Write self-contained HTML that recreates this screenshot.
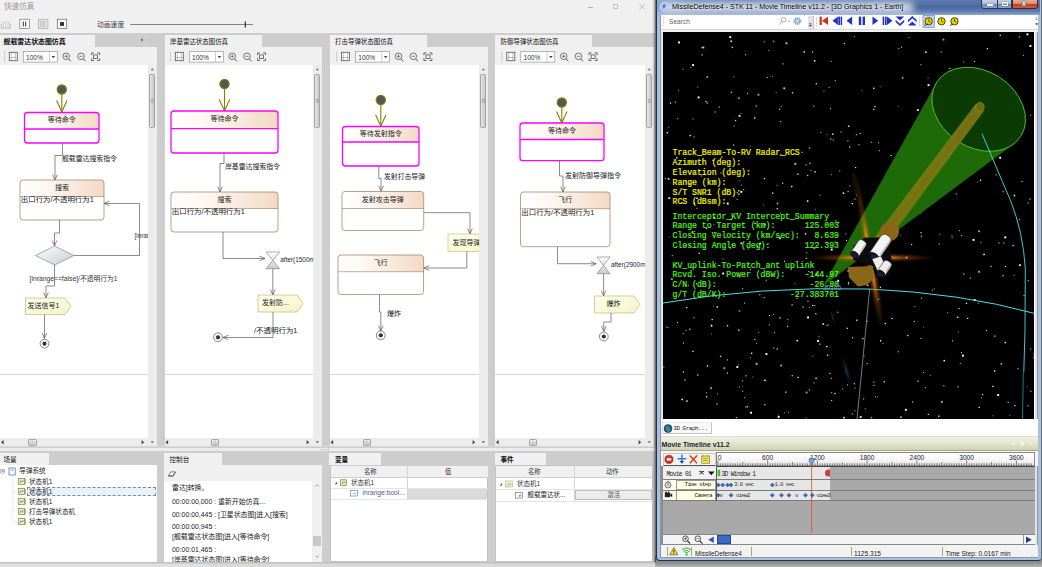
<!DOCTYPE html>
<html><head><meta charset="utf-8"><title>快速仿真</title>
<style>
html,body{margin:0;padding:0}
body{width:1042px;height:567px;position:relative;overflow:hidden;background:#cdcdcd;font-family:'Liberation Sans','Noto Sans CJK SC',sans-serif;}
div{box-sizing:border-box}
svg{position:absolute;left:0;top:0;overflow:hidden}
svg text{font-family:'Liberation Sans','Noto Sans CJK SC',sans-serif}
.m text{font-family:'Liberation Mono','DejaVu Sans Mono',monospace}
</style></head><body>
<div style="position:absolute;left:0px;top:0px;width:655px;height:33px;background:#f0f0f0;"></div>
<div style="position:absolute;left:4px;top:1.5px;font-size:7.6px;line-height:9.6px;color:#9a9a9a;white-space:nowrap;">快速仿真</div>
<div style="position:absolute;left:587.5px;top:7px;width:5px;height:0.8px;background:#b0b0b0;"></div>
<div style="position:absolute;left:612.9px;top:4.4px;width:5.5px;height:5.1px;background:transparent;border:0.7px solid #c2c2c2"></div>
<svg width="655" height="14" viewBox="0 0 655 14"><path d="M639.2 3.8l5.7 5.8M644.9 3.8l-5.7 5.8" stroke="#b4b4b4" stroke-width="0.8"/></svg>
<svg width="655" height="34" viewBox="0 0 655 34">
<g stroke="#a8a8a8" stroke-width="0.8" fill="none"><path d="M1.3 23.5v4.6h9v-4.6"/><path d="M3.4 21.5v5M5.8 21.5v5M8.2 21.5v5" stroke-dasharray="1.2 0.7"/></g>
<rect x="19.8" y="19.2" width="9.6" height="9.4" fill="#fafafa" stroke="#777" stroke-width="0.7"/><path d="M23.3 21.5v5M25.7 21.5v5" stroke="#333" stroke-width="1"/>
<rect x="38.3" y="19.2" width="9.6" height="9.4" fill="#e4e4e4" stroke="#aaa" stroke-width="0.7"/><rect x="40.5" y="21.5" width="4.5" height="5" fill="#d0d0d0" stroke="#bbb" stroke-width="0.5"/>
<rect x="57.3" y="19.2" width="9.4" height="9.4" fill="#fafafa" stroke="#666" stroke-width="0.7"/><rect x="60" y="22.1" width="4" height="3.8" fill="#333"/>
<path d="M130 24.5H253" stroke="#555" stroke-width="0.7"/><path d="M245.3 21.5v6" stroke="#333" stroke-width="1.2"/>
</svg>
<div style="position:absolute;left:97px;top:20.5px;font-size:6.8px;line-height:8.8px;color:#444;white-space:nowrap;">动画速度</div>
<div style="position:absolute;left:0px;top:35px;width:95px;height:12.5px;background:#f0f0f0;"></div>
<div style="position:absolute;left:3.6px;top:38.3px;font-size:6.9px;line-height:8.9px;color:#111;white-space:nowrap;font-weight:bold;">舰载雷达状态图仿真</div>
<div style="position:absolute;left:0px;top:47px;width:157.2px;height:18.5px;background:#f0f0f0;border-bottom:0.8px solid #c8c8c8"></div>
<div style="position:absolute;left:0px;top:65.3px;width:148.2px;height:373px;background:#fff;"></div>
<div style="position:absolute;left:148.2px;top:65.3px;width:9px;height:373px;background:#ececec;"></div>
<div style="position:absolute;left:148.6px;top:74px;width:6.5px;height:53.5px;background:#d4d4d4;border:0.6px solid #a4a4a4;border-radius:1.2px;background:linear-gradient(90deg,#e6e6e6,#c8c8c8)"></div>
<div style="position:absolute;left:0px;top:438px;width:157.2px;height:8.3px;background:#ececec;"></div>
<div style="position:absolute;left:27.5px;top:439px;width:9.5px;height:6.6px;background:#d4d4d4;border:0.6px solid #a4a4a4;border-radius:1.2px;background:linear-gradient(#ececec,#c8c8c8)"></div>
<div style="position:absolute;left:0px;top:374px;width:148.2px;height:0.8px;background:#d8d8d8;"></div>
<div style="position:absolute;left:164.5px;top:35px;width:97px;height:12.5px;background:#f0f0f0;"></div>
<div style="position:absolute;left:170.1px;top:38.3px;font-size:6.45px;line-height:8.45px;color:#111;white-space:nowrap;">岸基雷达状态图仿真</div>
<div style="position:absolute;left:164.5px;top:47px;width:157.7px;height:18.5px;background:#f0f0f0;border-bottom:0.8px solid #c8c8c8"></div>
<div style="position:absolute;left:164.5px;top:65.3px;width:148.7px;height:373px;background:#fff;"></div>
<div style="position:absolute;left:313.2px;top:65.3px;width:9px;height:373px;background:#ececec;"></div>
<div style="position:absolute;left:313.59999999999997px;top:74px;width:6.5px;height:53.5px;background:#d4d4d4;border:0.6px solid #a4a4a4;border-radius:1.2px;background:linear-gradient(90deg,#e6e6e6,#c8c8c8)"></div>
<div style="position:absolute;left:164.5px;top:438px;width:157.7px;height:8.3px;background:#ececec;"></div>
<div style="position:absolute;left:211.1px;top:439px;width:7.8px;height:6.6px;background:#d4d4d4;border:0.6px solid #a4a4a4;border-radius:1.2px;background:linear-gradient(#ececec,#c8c8c8)"></div>
<div style="position:absolute;left:164.5px;top:374px;width:148.7px;height:0.8px;background:#d8d8d8;"></div>
<div style="position:absolute;left:329.5px;top:35px;width:97px;height:12.5px;background:#f0f0f0;"></div>
<div style="position:absolute;left:335.1px;top:38.3px;font-size:6.45px;line-height:8.45px;color:#111;white-space:nowrap;">打击导弹状态图仿真</div>
<div style="position:absolute;left:329.5px;top:47px;width:158.7px;height:18.5px;background:#f0f0f0;border-bottom:0.8px solid #c8c8c8"></div>
<div style="position:absolute;left:329.5px;top:65.3px;width:149.7px;height:373px;background:#fff;"></div>
<div style="position:absolute;left:479.2px;top:65.3px;width:9px;height:373px;background:#ececec;"></div>
<div style="position:absolute;left:479.59999999999997px;top:74px;width:6.5px;height:53.5px;background:#d4d4d4;border:0.6px solid #a4a4a4;border-radius:1.2px;background:linear-gradient(90deg,#e6e6e6,#c8c8c8)"></div>
<div style="position:absolute;left:329.5px;top:438px;width:158.7px;height:8.3px;background:#ececec;"></div>
<div style="position:absolute;left:362.5px;top:439px;width:8.5px;height:6.6px;background:#d4d4d4;border:0.6px solid #a4a4a4;border-radius:1.2px;background:linear-gradient(#ececec,#c8c8c8)"></div>
<div style="position:absolute;left:329.5px;top:374px;width:149.7px;height:0.8px;background:#d8d8d8;"></div>
<div style="position:absolute;left:495px;top:35px;width:96.5px;height:12.5px;background:#f0f0f0;"></div>
<div style="position:absolute;left:500.6px;top:38.3px;font-size:6.45px;line-height:8.45px;color:#111;white-space:nowrap;">防御导弹状态图仿真</div>
<div style="position:absolute;left:495px;top:47px;width:159.2px;height:18.5px;background:#f0f0f0;border-bottom:0.8px solid #c8c8c8"></div>
<div style="position:absolute;left:495px;top:65.3px;width:150.2px;height:373px;background:#fff;"></div>
<div style="position:absolute;left:645.2px;top:65.3px;width:9px;height:373px;background:#ececec;"></div>
<div style="position:absolute;left:645.6px;top:74px;width:6.5px;height:53.5px;background:#d4d4d4;border:0.6px solid #a4a4a4;border-radius:1.2px;background:linear-gradient(90deg,#e6e6e6,#c8c8c8)"></div>
<div style="position:absolute;left:495px;top:438px;width:159.2px;height:8.3px;background:#ececec;"></div>
<div style="position:absolute;left:528.8px;top:439px;width:8.3px;height:6.6px;background:#d4d4d4;border:0.6px solid #a4a4a4;border-radius:1.2px;background:linear-gradient(#ececec,#c8c8c8)"></div>
<div style="position:absolute;left:495px;top:374px;width:150.2px;height:0.8px;background:#d8d8d8;"></div>
<svg width="655" height="450" viewBox="0 0 655 450">
<g transform="translate(0,0)"><g transform="translate(0,0.5)"><path d="M4.5 51v10" stroke="#bbb" stroke-width="0.7"/><rect x="9.3" y="51.8" width="8" height="8.4" fill="#fff" stroke="#555" stroke-width="0.8"/><path d="M9.3 57h8M11.3 51.8v8.4M15.3 51.8v8.4" stroke="#888" stroke-width="0.5"/><rect x="23.3" y="51" width="34" height="10.6" fill="#fff" stroke="#999" stroke-width="0.7"/><path d="M49.5 51v10.6" stroke="#aaa" stroke-width="0.6"/><path d="M51.6 55.5h3.6l-1.8 2.2z" fill="#444"/><circle cx="66.2" cy="55.8" r="3.3" fill="none" stroke="#555" stroke-width="0.8"/><path d="M68.60000000000001 58.4l2.2 2.4" stroke="#555" stroke-width="1"/><path d="M64.5 55.8h3.4" stroke="#555" stroke-width="0.7"/><path d="M66.2 54.1v3.4" stroke="#555" stroke-width="0.7"/><circle cx="81" cy="55.8" r="3.3" fill="none" stroke="#555" stroke-width="0.8"/><path d="M83.4 58.4l2.2 2.4" stroke="#555" stroke-width="1"/><path d="M79.3 55.8h3.4" stroke="#555" stroke-width="0.7"/><path d="M91.6 54.6v-2.2h2.4M97.2 52.4h2.4v2.2M99.6 57.8v2.2h-2.4M94 60h-2.4v-2.2" fill="none" stroke="#555" stroke-width="0.9"/><rect x="93.6" y="54.4" width="4" height="3.7" fill="none" stroke="#555" stroke-width="0.8"/></g><path d="M150.79999999999998 70.2h3l-1.5 -2z" fill="#666"/><path d="M150.7 99.3h3.2M150.7 100.8h3.2M150.7 102.3h3.2" stroke="#777" stroke-width="0.5"/><path d="M3.6 440v4.4l-2.6 -2.2z" fill="#444"/><path d="M141.6 440v4.4l2.6 -2.2z" fill="#444"/><path d="M150.6 441.3h3.4l-1.7 2z" fill="#666"/><path d="M32.3 440.5v3.5" stroke="#999" stroke-width="0.4"/></g>
<g transform="translate(164.5,0)"><g transform="translate(1.5,0.5)"><path d="M4.5 51v10" stroke="#bbb" stroke-width="0.7"/><rect x="9.3" y="51.8" width="8" height="8.4" fill="#fff" stroke="#555" stroke-width="0.8"/><path d="M9.3 57h8M11.3 51.8v8.4M15.3 51.8v8.4" stroke="#888" stroke-width="0.5"/><rect x="23.3" y="51" width="34" height="10.6" fill="#fff" stroke="#999" stroke-width="0.7"/><path d="M49.5 51v10.6" stroke="#aaa" stroke-width="0.6"/><path d="M51.6 55.5h3.6l-1.8 2.2z" fill="#444"/><circle cx="66.2" cy="55.8" r="3.3" fill="none" stroke="#555" stroke-width="0.8"/><path d="M68.60000000000001 58.4l2.2 2.4" stroke="#555" stroke-width="1"/><path d="M64.5 55.8h3.4" stroke="#555" stroke-width="0.7"/><path d="M66.2 54.1v3.4" stroke="#555" stroke-width="0.7"/><circle cx="81" cy="55.8" r="3.3" fill="none" stroke="#555" stroke-width="0.8"/><path d="M83.4 58.4l2.2 2.4" stroke="#555" stroke-width="1"/><path d="M79.3 55.8h3.4" stroke="#555" stroke-width="0.7"/><path d="M91.6 54.6v-2.2h2.4M97.2 52.4h2.4v2.2M99.6 57.8v2.2h-2.4M94 60h-2.4v-2.2" fill="none" stroke="#555" stroke-width="0.9"/><rect x="93.6" y="54.4" width="4" height="3.7" fill="none" stroke="#555" stroke-width="0.8"/></g><path d="M151.29999999999998 70.2h3l-1.5 -2z" fill="#666"/><path d="M151.2 99.3h3.2M151.2 100.8h3.2M151.2 102.3h3.2" stroke="#777" stroke-width="0.5"/><path d="M3.6 440v4.4l-2.6 -2.2z" fill="#444"/><path d="M142.1 440v4.4l2.6 -2.2z" fill="#444"/><path d="M151.1 441.3h3.4l-1.7 2z" fill="#666"/><path d="M50.5 440.5v3.5" stroke="#999" stroke-width="0.4"/></g>
<g transform="translate(329.5,0)"><g transform="translate(2.8,0.5)"><path d="M4.5 51v10" stroke="#bbb" stroke-width="0.7"/><rect x="9.3" y="51.8" width="8" height="8.4" fill="#fff" stroke="#555" stroke-width="0.8"/><path d="M9.3 57h8M11.3 51.8v8.4M15.3 51.8v8.4" stroke="#888" stroke-width="0.5"/><rect x="23.3" y="51" width="34" height="10.6" fill="#fff" stroke="#999" stroke-width="0.7"/><path d="M49.5 51v10.6" stroke="#aaa" stroke-width="0.6"/><path d="M51.6 55.5h3.6l-1.8 2.2z" fill="#444"/><circle cx="66.2" cy="55.8" r="3.3" fill="none" stroke="#555" stroke-width="0.8"/><path d="M68.60000000000001 58.4l2.2 2.4" stroke="#555" stroke-width="1"/><path d="M64.5 55.8h3.4" stroke="#555" stroke-width="0.7"/><path d="M66.2 54.1v3.4" stroke="#555" stroke-width="0.7"/><circle cx="81" cy="55.8" r="3.3" fill="none" stroke="#555" stroke-width="0.8"/><path d="M83.4 58.4l2.2 2.4" stroke="#555" stroke-width="1"/><path d="M79.3 55.8h3.4" stroke="#555" stroke-width="0.7"/><path d="M91.6 54.6v-2.2h2.4M97.2 52.4h2.4v2.2M99.6 57.8v2.2h-2.4M94 60h-2.4v-2.2" fill="none" stroke="#555" stroke-width="0.9"/><rect x="93.6" y="54.4" width="4" height="3.7" fill="none" stroke="#555" stroke-width="0.8"/></g><path d="M152.29999999999998 70.2h3l-1.5 -2z" fill="#666"/><path d="M152.2 99.3h3.2M152.2 100.8h3.2M152.2 102.3h3.2" stroke="#777" stroke-width="0.5"/><path d="M3.6 440v4.4l-2.6 -2.2z" fill="#444"/><path d="M143.1 440v4.4l2.6 -2.2z" fill="#444"/><path d="M152.1 441.3h3.4l-1.7 2z" fill="#666"/><path d="M37.3 440.5v3.5" stroke="#999" stroke-width="0.4"/></g>
<g transform="translate(495,0)"><g transform="translate(2.5,0.5)"><path d="M4.5 51v10" stroke="#bbb" stroke-width="0.7"/><rect x="9.3" y="51.8" width="8" height="8.4" fill="#fff" stroke="#555" stroke-width="0.8"/><path d="M9.3 57h8M11.3 51.8v8.4M15.3 51.8v8.4" stroke="#888" stroke-width="0.5"/><rect x="23.3" y="51" width="34" height="10.6" fill="#fff" stroke="#999" stroke-width="0.7"/><path d="M49.5 51v10.6" stroke="#aaa" stroke-width="0.6"/><path d="M51.6 55.5h3.6l-1.8 2.2z" fill="#444"/><circle cx="66.2" cy="55.8" r="3.3" fill="none" stroke="#555" stroke-width="0.8"/><path d="M68.60000000000001 58.4l2.2 2.4" stroke="#555" stroke-width="1"/><path d="M64.5 55.8h3.4" stroke="#555" stroke-width="0.7"/><path d="M66.2 54.1v3.4" stroke="#555" stroke-width="0.7"/><circle cx="81" cy="55.8" r="3.3" fill="none" stroke="#555" stroke-width="0.8"/><path d="M83.4 58.4l2.2 2.4" stroke="#555" stroke-width="1"/><path d="M79.3 55.8h3.4" stroke="#555" stroke-width="0.7"/><path d="M91.6 54.6v-2.2h2.4M97.2 52.4h2.4v2.2M99.6 57.8v2.2h-2.4M94 60h-2.4v-2.2" fill="none" stroke="#555" stroke-width="0.9"/><rect x="93.6" y="54.4" width="4" height="3.7" fill="none" stroke="#555" stroke-width="0.8"/></g><path d="M152.79999999999998 70.2h3l-1.5 -2z" fill="#666"/><path d="M152.7 99.3h3.2M152.7 100.8h3.2M152.7 102.3h3.2" stroke="#777" stroke-width="0.5"/><path d="M3.6 440v4.4l-2.6 -2.2z" fill="#444"/><path d="M143.6 440v4.4l2.6 -2.2z" fill="#444"/><path d="M152.6 441.3h3.4l-1.7 2z" fill="#666"/><path d="M38 440.5v3.5" stroke="#999" stroke-width="0.4"/></g>
<path d="M142.6 38.2v3.2l-2 -1.6z" fill="#555"/><path d="M149.6 38.2v3.2l2 -1.6z" fill="#bbb"/>
</svg>
<div style="position:absolute;left:26px;top:53.6px;font-size:6.6px;line-height:8.6px;color:#334;white-space:nowrap;">100%</div>
<div style="position:absolute;left:192.0px;top:53.6px;font-size:6.6px;line-height:8.6px;color:#334;white-space:nowrap;">100%</div>
<div style="position:absolute;left:358.3px;top:53.6px;font-size:6.6px;line-height:8.6px;color:#334;white-space:nowrap;">100%</div>
<div style="position:absolute;left:523.5px;top:53.6px;font-size:6.6px;line-height:8.6px;color:#334;white-space:nowrap;">100%</div>
<svg width="655" height="450" viewBox="0 0 655 450">
<defs>
<linearGradient id="hd" x1="0" x2="1" y1="0" y2="0"><stop offset="0" stop-color="#fff"/><stop offset="0.35" stop-color="#fdf6f0"/><stop offset="1" stop-color="#f3d9c4"/></linearGradient>
<linearGradient id="sg" x1="0" x2="1" y1="0" y2="1"><stop offset="0" stop-color="#ffffee"/><stop offset="1" stop-color="#f4f4c4"/></linearGradient>
<linearGradient id="hgl" x1="0" x2="0" y1="0" y2="1"><stop offset="0" stop-color="#fff"/><stop offset="1" stop-color="#c8ccd0"/></linearGradient>
<linearGradient id="dm" x1="0" x2="1" y1="0" y2="1"><stop offset="0" stop-color="#fff"/><stop offset="1" stop-color="#c4ccd4"/></linearGradient>
<clipPath id="c1"><rect x="0" y="65.3" width="148.2" height="372.7"/></clipPath>
<clipPath id="c2"><rect x="164.5" y="65.3" width="148.7" height="372.7"/></clipPath>
<clipPath id="c3"><rect x="329.5" y="65.3" width="149.7" height="372.7"/></clipPath>
<clipPath id="c4"><rect x="495" y="65.3" width="150.2" height="372.7"/></clipPath>
</defs>
<g clip-path="url(#c1)">
<path d="M61.8 89.5V112" stroke="#808000" stroke-width="1.1"/>
<path d="M56.599999999999994 100.5L61.8 112L67.0 100.5" stroke="#808000" stroke-width="1.1" fill="none"/>
<circle cx="61.8" cy="89.5" r="4.6" fill="#555" stroke="#808000" stroke-width="1.2"/>
<rect x="24.5" y="112.5" width="74.5" height="30.5" rx="3" fill="#fff"/>
<path d="M24.5 129.0V115.5a3 3 0 0 1 3 -3H96.0a3 3 0 0 1 3 3V129.0z" fill="url(#hd)"/>
<rect x="24.5" y="112.5" width="74.5" height="30.5" rx="3" fill="none" stroke="#ff00ff" stroke-width="1.3"/>
<path d="M24.5 129.0H99.0" stroke="#ff00ff" stroke-width="1.3"/>
<text x="61.75" y="122.35" font-size="7" text-anchor="middle" fill="#222">等待命令</text>
<path d="M62.5 143V155.5H55V180" stroke="#5a5a5a" stroke-width="0.7" fill="none"/>
<path d="M52.7 174.5L55 180L57.3 174.5" stroke="#5a5a5a" stroke-width="0.7" fill="none"/>
<text x="62" y="160.9" font-size="7" fill="#222" textLength="55" lengthAdjust="spacingAndGlyphs">舰载雷达搜索指令</text>
<rect x="20" y="180" width="84" height="40" rx="3" fill="#fff"/>
<path d="M20 196.5V183a3 3 0 0 1 3 -3H101a3 3 0 0 1 3 3V196.5z" fill="url(#hd)"/>
<rect x="20" y="180" width="84" height="40" rx="3" fill="none" stroke="#9a7a5a" stroke-width="0.7"/>
<path d="M20 196.5H104" stroke="#9a7a5a" stroke-width="0.6"/>
<text x="62.0" y="189.85" font-size="7" text-anchor="middle" fill="#222">搜索</text>
<text x="20.8" y="202.4" font-size="7.3" fill="#222" textLength="73" lengthAdjust="spacingAndGlyphs">出口行为/不透明行为1</text>
<path d="M59.5 220V233H54.5V246" stroke="#5a5a5a" stroke-width="0.7" fill="none"/>
<path d="M52.2 240.5L54.5 246L56.8 240.5" stroke="#5a5a5a" stroke-width="0.7" fill="none"/>
<path d="M35.45 255.5L54.7 246.0L73.95 255.5L54.7 265.0z" fill="url(#dm)" stroke="#777" stroke-width="0.6"/>
<path d="M74 255.5H139.5V203.5H104" stroke="#5a5a5a" stroke-width="0.7" fill="none"/>
<path d="M109.5 201.2L104 203.5L109.5 205.8" stroke="#5a5a5a" stroke-width="0.7" fill="none"/>
<text x="134.5" y="237.70000000000002" font-size="6.3" fill="#334">[inrange==true]</text>
<path d="M54.5 265V286H46V298" stroke="#5a5a5a" stroke-width="0.7" fill="none"/>
<path d="M43.7 292.5L46 298L48.3 292.5" stroke="#5a5a5a" stroke-width="0.7" fill="none"/>
<text x="29.5" y="280.9" font-size="6.6" fill="#334" textLength="88" lengthAdjust="spacingAndGlyphs">[inrange==false]/不透明行为1</text>
<path d="M25.5 298H65.0L71.0 306.25L65.0 314.5H25.5z" fill="url(#sg)" stroke="#b0b070" stroke-width="0.6"/>
<text x="27.5" y="308.15" font-size="7" fill="#222">发送信号1</text>
<path d="M44.5 314.5V338" stroke="#5a5a5a" stroke-width="0.7" fill="none"/>
<path d="M42.2 333.0L44.5 338.5L46.8 333.0" stroke="#5a5a5a" stroke-width="0.7" fill="none"/>
<circle cx="44.5" cy="343.7" r="4.4" fill="#fff" stroke="#555" stroke-width="0.7"/><circle cx="44.5" cy="343.7" r="2.1" fill="#333"/>
</g>
<g clip-path="url(#c2)">
<path d="M224.5 84V111" stroke="#808000" stroke-width="1.1"/>
<path d="M219.3 99.5L224.5 111L229.7 99.5" stroke="#808000" stroke-width="1.1" fill="none"/>
<circle cx="224.5" cy="84" r="4.6" fill="#555" stroke="#808000" stroke-width="1.2"/>
<rect x="171" y="111" width="107" height="42" rx="3" fill="#fff"/>
<path d="M171 128.7V114a3 3 0 0 1 3 -3H275a3 3 0 0 1 3 3V128.7z" fill="url(#hd)"/>
<rect x="171" y="111" width="107" height="42" rx="3" fill="none" stroke="#ff00ff" stroke-width="1.3"/>
<path d="M171 128.7H278" stroke="#ff00ff" stroke-width="1.3"/>
<text x="224.5" y="121.44999999999999" font-size="7" text-anchor="middle" fill="#222">等待命令</text>
<path d="M224 153V163.5H220V192" stroke="#5a5a5a" stroke-width="0.7" fill="none"/>
<path d="M217.7 186.5L220 192L222.3 186.5" stroke="#5a5a5a" stroke-width="0.7" fill="none"/>
<text x="225" y="168.9" font-size="7" fill="#222" textLength="55" lengthAdjust="spacingAndGlyphs">岸基雷达搜索指令</text>
<rect x="171" y="192" width="107" height="40" rx="3" fill="#fff"/>
<path d="M171 208.5V195a3 3 0 0 1 3 -3H275a3 3 0 0 1 3 3V208.5z" fill="url(#hd)"/>
<rect x="171" y="192" width="107" height="40" rx="3" fill="none" stroke="#9a7a5a" stroke-width="0.7"/>
<path d="M171 208.5H278" stroke="#9a7a5a" stroke-width="0.6"/>
<text x="224.5" y="201.85" font-size="7" text-anchor="middle" fill="#222">搜索</text>
<text x="171.8" y="214.4" font-size="7.3" fill="#222" textLength="73" lengthAdjust="spacingAndGlyphs">出口行为/不透明行为1</text>
<path d="M223 232V258.5H265" stroke="#5a5a5a" stroke-width="0.7" fill="none"/>
<path d="M259.5 256.2L265 258.5L259.5 260.8" stroke="#5a5a5a" stroke-width="0.7" fill="none"/>
<path d="M266.05 252H279.55L266.05 268.7H279.55z" fill="url(#hgl)" stroke="#777" stroke-width="0.6"/>
<text x="280.3" y="261.9" font-size="6.4" fill="#223">after(1500ms)</text>
<path d="M272.8 268.7V295" stroke="#5a5a5a" stroke-width="0.7" fill="none"/>
<path d="M270.5 289.5L272.8 295L275.1 289.5" stroke="#5a5a5a" stroke-width="0.7" fill="none"/>
<path d="M258 295H297L303 303.5L297 312H258z" fill="url(#sg)" stroke="#b0b070" stroke-width="0.6"/>
<text x="262" y="305.4" font-size="7" fill="#222">发射防...</text>
<path d="M273 312V337.5H223" stroke="#5a5a5a" stroke-width="0.7" fill="none"/>
<path d="M228.5 335.2L223 337.5L228.5 339.8" stroke="#5a5a5a" stroke-width="0.7" fill="none"/>
<text x="254" y="332.9" font-size="7" fill="#222" textLength="43.5" lengthAdjust="spacingAndGlyphs">/不透明行为1</text>
<circle cx="218" cy="337.3" r="4.4" fill="#fff" stroke="#555" stroke-width="0.7"/><circle cx="218" cy="337.3" r="2.1" fill="#333"/>
</g>
<g clip-path="url(#c3)">
<path d="M380.8 100V126.2" stroke="#808000" stroke-width="1.1"/>
<path d="M375.6 114.7L380.8 126.2L386.0 114.7" stroke="#808000" stroke-width="1.1" fill="none"/>
<circle cx="380.8" cy="100" r="4.6" fill="#555" stroke="#808000" stroke-width="1.2"/>
<rect x="342.5" y="126.5" width="76.5" height="39.5" rx="3" fill="#fff"/>
<path d="M342.5 142.0V129.5a3 3 0 0 1 3 -3H416.0a3 3 0 0 1 3 3V142.0z" fill="url(#hd)"/>
<rect x="342.5" y="126.5" width="76.5" height="39.5" rx="3" fill="none" stroke="#ff00ff" stroke-width="1.3"/>
<path d="M342.5 142.0H419.0" stroke="#ff00ff" stroke-width="1.3"/>
<text x="380.75" y="135.85" font-size="7" text-anchor="middle" fill="#222">等待发射指令</text>
<path d="M378.8 166V178.5H381V191" stroke="#5a5a5a" stroke-width="0.7" fill="none"/>
<path d="M378.7 185.8L381 191.3L383.3 185.8" stroke="#5a5a5a" stroke-width="0.7" fill="none"/>
<text x="384" y="178.9" font-size="7" fill="#222" textLength="41" lengthAdjust="spacingAndGlyphs">发射打击导弹</text>
<rect x="342" y="191.5" width="81.7" height="39" rx="3" fill="#fff"/>
<path d="M342 208.5V194.5a3 3 0 0 1 3 -3H420.7a3 3 0 0 1 3 3V208.5z" fill="url(#hd)"/>
<rect x="342" y="191.5" width="81.7" height="39" rx="3" fill="none" stroke="#9a7a5a" stroke-width="0.7"/>
<path d="M342 208.5H423.7" stroke="#9a7a5a" stroke-width="0.6"/>
<text x="382.85" y="201.6" font-size="7" text-anchor="middle" fill="#222">发射攻击导弹</text>
<path d="M423.7 212.7H470V234" stroke="#5a5a5a" stroke-width="0.7" fill="none"/>
<path d="M467.7 228.5L470 234L472.3 228.5" stroke="#5a5a5a" stroke-width="0.7" fill="none"/>
<rect x="448" y="234" width="50" height="17.5" fill="url(#sg)" stroke="#b8b878" stroke-width="0.6"/>
<text x="452.5" y="244.65" font-size="7" fill="#222">发现导弹</text>
<path d="M466.8 251.5V268H423.5" stroke="#5a5a5a" stroke-width="0.7" fill="none"/>
<path d="M429.2 265.7L423.7 268L429.2 270.3" stroke="#5a5a5a" stroke-width="0.7" fill="none"/>
<rect x="338" y="255" width="85.5" height="39.5" rx="3" fill="#fff"/>
<path d="M338 271.7V258a3 3 0 0 1 3 -3H420.5a3 3 0 0 1 3 3V271.7z" fill="url(#hd)"/>
<rect x="338" y="255" width="85.5" height="39.5" rx="3" fill="none" stroke="#9a7a5a" stroke-width="0.7"/>
<path d="M338 271.7H423.5" stroke="#9a7a5a" stroke-width="0.6"/>
<text x="380.75" y="264.95000000000005" font-size="7" text-anchor="middle" fill="#222">飞行</text>
<path d="M379.5 294.5V312H380.8V331" stroke="#5a5a5a" stroke-width="0.7" fill="none"/>
<path d="M378.5 325.5L380.8 331L383.1 325.5" stroke="#5a5a5a" stroke-width="0.7" fill="none"/>
<text x="387" y="316.4" font-size="7" fill="#222" textLength="14" lengthAdjust="spacingAndGlyphs">爆炸</text>
<circle cx="380.8" cy="335.3" r="4.4" fill="#fff" stroke="#555" stroke-width="0.7"/><circle cx="380.8" cy="335.3" r="2.1" fill="#333"/>
</g>
<g clip-path="url(#c4)">
<path d="M561.8 102.5V123" stroke="#808000" stroke-width="1.1"/>
<path d="M556.5999999999999 111.5L561.8 123L567.0 111.5" stroke="#808000" stroke-width="1.1" fill="none"/>
<circle cx="561.8" cy="102.5" r="4.6" fill="#555" stroke="#808000" stroke-width="1.2"/>
<rect x="520" y="123" width="84" height="37.7" rx="3" fill="#fff"/>
<path d="M520 139.5V126a3 3 0 0 1 3 -3H601a3 3 0 0 1 3 3V139.5z" fill="url(#hd)"/>
<rect x="520" y="123" width="84" height="37.7" rx="3" fill="none" stroke="#ff00ff" stroke-width="1.3"/>
<path d="M520 139.5H604" stroke="#ff00ff" stroke-width="1.3"/>
<text x="562.0" y="132.85" font-size="7" text-anchor="middle" fill="#222">等待命令</text>
<path d="M559.5 161V176H563V192" stroke="#5a5a5a" stroke-width="0.7" fill="none"/>
<path d="M560.7 186.5L563 192L565.3 186.5" stroke="#5a5a5a" stroke-width="0.7" fill="none"/>
<text x="565" y="178.1" font-size="7" fill="#222" textLength="56" lengthAdjust="spacingAndGlyphs">发射防御导弹指令</text>
<rect x="520.5" y="192" width="89.5" height="54.7" rx="3" fill="#fff"/>
<path d="M520.5 208.7V195a3 3 0 0 1 3 -3H607.0a3 3 0 0 1 3 3V208.7z" fill="url(#hd)"/>
<rect x="520.5" y="192" width="89.5" height="54.7" rx="3" fill="none" stroke="#9a7a5a" stroke-width="0.7"/>
<path d="M520.5 208.7H610.0" stroke="#9a7a5a" stroke-width="0.6"/>
<text x="565.25" y="201.95" font-size="7" text-anchor="middle" fill="#222">飞行</text>
<text x="521.3" y="214.6" font-size="7.3" fill="#222" textLength="73" lengthAdjust="spacingAndGlyphs">出口行为/不透明行为1</text>
<path d="M557.5 247V263.7H596" stroke="#5a5a5a" stroke-width="0.7" fill="none"/>
<path d="M590.8 261.4L596.3 263.7L590.8 266.0" stroke="#5a5a5a" stroke-width="0.7" fill="none"/>
<path d="M597.0 257H610.0L597.0 273.7H610.0z" fill="url(#hgl)" stroke="#777" stroke-width="0.6"/>
<text x="611" y="266.9" font-size="6.4" fill="#223">after(2900ms)</text>
<path d="M603.6 273.7V296" stroke="#5a5a5a" stroke-width="0.7" fill="none"/>
<path d="M601.3000000000001 290.5L603.6 296L605.9 290.5" stroke="#5a5a5a" stroke-width="0.7" fill="none"/>
<path d="M594.5 296H634.0L640.0 304.5L634.0 313H594.5z" fill="url(#sg)" stroke="#b0b070" stroke-width="0.6"/>
<text x="606.5" y="306.4" font-size="7" fill="#222">爆炸</text>
<path d="M611 313V322H603.8V331" stroke="#5a5a5a" stroke-width="0.7" fill="none"/>
<path d="M601.5 326.0L603.8 331.5L606.0999999999999 326.0" stroke="#5a5a5a" stroke-width="0.7" fill="none"/>
<circle cx="603.8" cy="336.5" r="4.4" fill="#fff" stroke="#555" stroke-width="0.7"/><circle cx="603.8" cy="336.5" r="2.1" fill="#333"/>
</g>
</svg>
<div style="position:absolute;left:0px;top:446.3px;width:655.6px;height:1.2px;background:#d8d8d8;"></div>
<div style="position:absolute;left:0px;top:447.5px;width:655.6px;height:3.6px;background:#ececec;"></div>
<div style="position:absolute;left:320.6px;top:445.8px;font-size:5.5px;line-height:7.5px;color:#6a8ab0;white-space:nowrap;letter-spacing:0.6px;line-height:6px;font-weight:bold">····</div>
<div style="position:absolute;left:0px;top:561.8px;width:655.6px;height:1.7px;background:#c2c2c2;"></div>
<div style="position:absolute;left:0px;top:563.5px;width:655.6px;height:3.5px;background:#e0e0e0;"></div>
<div style="position:absolute;left:209px;top:563.5px;width:446.6px;height:3.5px;background:#dadada;"></div>
<div style="position:absolute;left:0px;top:453px;width:49px;height:12.3px;background:#f0f0f0;"></div>
<div style="position:absolute;left:3.5px;top:455.6px;font-size:6.6px;line-height:8.6px;color:#111;white-space:nowrap;">场景</div>
<div style="position:absolute;left:0px;top:465.3px;width:157.2px;height:96.7px;background:#fff;"></div>
<div style="position:absolute;left:27.2px;top:486.6px;width:129px;height:9.8px;background:#e8f2fc;border:0.6px dashed #7a8a9a"></div>
<div style="position:absolute;left:19.3px;top:467.29999999999995px;font-size:6.6px;line-height:8.6px;color:#222;white-space:nowrap;">导弹系统</div>
<div style="position:absolute;left:29px;top:477.5px;font-size:6.6px;line-height:8.6px;color:#222;white-space:nowrap;">状态机1</div>
<div style="position:absolute;left:29px;top:487.5px;font-size:6.6px;line-height:8.6px;color:#222;white-space:nowrap;">状态机1</div>
<div style="position:absolute;left:29px;top:497.59999999999997px;font-size:6.6px;line-height:8.6px;color:#222;white-space:nowrap;">状态机1</div>
<div style="position:absolute;left:29px;top:507.69999999999993px;font-size:6.6px;line-height:8.6px;color:#222;white-space:nowrap;">打击导弹状态机</div>
<div style="position:absolute;left:29px;top:517.6px;font-size:6.6px;line-height:8.6px;color:#222;white-space:nowrap;">状态机1</div>
<svg width="160" height="567" viewBox="0 0 160 567">
<rect x="0.8" y="469.3" width="3.8" height="3.8" fill="#fff" stroke="#8a8a8a" stroke-width="0.6"/><path d="M1.7 471.2h2" stroke="#223" stroke-width="0.7"/>
<rect x="9" y="468" width="6.2" height="7" fill="#fff" stroke="#4a7ab8" stroke-width="0.8"/><path d="M10.5 470h3.2" stroke="#4a7ab8" stroke-width="0.7"/>
<path d="M12.5 476V521.5" stroke="#bbb" stroke-width="0.5" stroke-dasharray="0.7 0.9"/>
<path d="M12.5 481.6h5" stroke="#bbb" stroke-width="0.5" stroke-dasharray="0.7 0.9"/>
<rect x="18.3" y="478.40000000000003" width="6.4" height="6" fill="#e8ecc8" stroke="#7a8a3a" stroke-width="0.7"/><path d="M19.5 482.90000000000003l1.4 -2.2 1.2 1.4 1.4 -2" stroke="#5a6a2a" stroke-width="0.6" fill="none"/><path d="M25.3 479.1v5" stroke="#444" stroke-width="0.5"/>
<path d="M12.5 491.6h5" stroke="#bbb" stroke-width="0.5" stroke-dasharray="0.7 0.9"/>
<rect x="18.3" y="488.40000000000003" width="6.4" height="6" fill="#e8ecc8" stroke="#7a8a3a" stroke-width="0.7"/><path d="M19.5 492.90000000000003l1.4 -2.2 1.2 1.4 1.4 -2" stroke="#5a6a2a" stroke-width="0.6" fill="none"/><path d="M25.3 489.1v5" stroke="#444" stroke-width="0.5"/>
<path d="M12.5 501.7h5" stroke="#bbb" stroke-width="0.5" stroke-dasharray="0.7 0.9"/>
<rect x="18.3" y="498.5" width="6.4" height="6" fill="#e8ecc8" stroke="#7a8a3a" stroke-width="0.7"/><path d="M19.5 503.0l1.4 -2.2 1.2 1.4 1.4 -2" stroke="#5a6a2a" stroke-width="0.6" fill="none"/><path d="M25.3 499.2v5" stroke="#444" stroke-width="0.5"/>
<path d="M12.5 511.8h5" stroke="#bbb" stroke-width="0.5" stroke-dasharray="0.7 0.9"/>
<rect x="18.3" y="508.6" width="6.4" height="6" fill="#e8ecc8" stroke="#7a8a3a" stroke-width="0.7"/><path d="M19.5 513.1l1.4 -2.2 1.2 1.4 1.4 -2" stroke="#5a6a2a" stroke-width="0.6" fill="none"/><path d="M25.3 509.3v5" stroke="#444" stroke-width="0.5"/>
<path d="M12.5 521.7h5" stroke="#bbb" stroke-width="0.5" stroke-dasharray="0.7 0.9"/>
<rect x="18.3" y="518.5" width="6.4" height="6" fill="#e8ecc8" stroke="#7a8a3a" stroke-width="0.7"/><path d="M19.5 523.0l1.4 -2.2 1.2 1.4 1.4 -2" stroke="#5a6a2a" stroke-width="0.6" fill="none"/><path d="M25.3 519.2v5" stroke="#444" stroke-width="0.5"/>
</svg>
<div style="position:absolute;left:164px;top:453px;width:58px;height:12.3px;background:#f0f0f0;"></div>
<div style="position:absolute;left:169.5px;top:455.6px;font-size:6.6px;line-height:8.6px;color:#111;white-space:nowrap;">控制台</div>
<div style="position:absolute;left:164px;top:465.3px;width:158px;height:15.3px;background:#f0f0f0;"></div>
<div style="position:absolute;left:164px;top:480.6px;width:158px;height:81.4px;background:#fff;"></div>
<div style="position:absolute;left:312.3px;top:480.6px;width:9.7px;height:81.4px;background:#f0f0f0;"></div>
<div style="position:absolute;left:313.3px;top:536px;width:8px;height:9.5px;background:#c8c8c8;"></div>
<svg width="330" height="567" viewBox="0 0 330 567">
<path d="M168.5 475.5l2.2 -3.6h4.6l-2.2 3.6zM170.7 471.9" fill="#fff" stroke="#333" stroke-width="0.6"/><path d="M168.5 475.5v0.9h4.6l2.2 -3.6v-0.9" fill="none" stroke="#333" stroke-width="0.5"/>
<path d="M315.3 486.5l1.9 -1.9 1.9 1.9" fill="none" stroke="#666" stroke-width="0.6"/><path d="M315.3 555.5l1.9 1.9 1.9 -1.9" fill="none" stroke="#666" stroke-width="0.6"/>
</svg>
<div style="position:absolute;left:164px;top:480.6px;width:148px;height:81.4px;overflow:hidden">
<div style="position:absolute;left:8px;top:2.699999999999977px;font-size:6.9px;line-height:9px;color:#222;white-space:nowrap">雷达]转换。</div>
<div style="position:absolute;left:8px;top:16.199999999999978px;font-size:6.9px;line-height:9px;color:#222;white-space:nowrap">00:00:00,000 : 重新开始仿真...</div>
<div style="position:absolute;left:8px;top:29.699999999999978px;font-size:6.9px;line-height:9px;color:#222;white-space:nowrap">00:00:00,445 : [卫星状态图]进入[搜索]</div>
<div style="position:absolute;left:8px;top:41.699999999999974px;font-size:6.9px;line-height:9px;color:#222;white-space:nowrap">00:00:00,945 :</div>
<div style="position:absolute;left:8px;top:51.699999999999974px;font-size:6.9px;line-height:9px;color:#222;white-space:nowrap">[舰载雷达状态图]进入[等待命令]</div>
<div style="position:absolute;left:8px;top:64.40000000000002px;font-size:6.9px;line-height:9px;color:#222;white-space:nowrap">00:00:01,465 :</div>
<div style="position:absolute;left:8px;top:73.99999999999993px;font-size:6.9px;line-height:9px;color:#222;white-space:nowrap">[岸基雷达状态图]进入[等待命令]</div>
</div>
<div style="position:absolute;left:329.4px;top:453px;width:52px;height:12.3px;background:#f0f0f0;"></div>
<div style="position:absolute;left:335px;top:455.6px;font-size:6.6px;line-height:8.6px;color:#111;white-space:nowrap;font-weight:bold">变量</div>
<div style="position:absolute;left:329.5px;top:465.8px;width:158px;height:96.2px;background:#fff;border:0.6px solid #c4c4c4"></div>
<div style="position:absolute;left:330.5px;top:466px;width:157px;height:11.7px;background:#f0f0f0;border-bottom:0.6px solid #d0d0d0"></div>
<div style="position:absolute;left:407.3px;top:466px;width:0.6px;height:33.5px;background:#d4d4d4;"></div>
<div style="position:absolute;left:364px;top:468px;font-size:6.3px;line-height:8.3px;color:#333;white-space:nowrap;">名称</div>
<div style="position:absolute;left:445px;top:468px;font-size:6.3px;line-height:8.3px;color:#333;white-space:nowrap;">值</div>
<div style="position:absolute;left:330.5px;top:488px;width:157px;height:0.5px;background:#e4e4e4;"></div>
<div style="position:absolute;left:407.9px;top:488.5px;width:79.5px;height:10.5px;background:#dadada;"></div>
<div style="position:absolute;left:330.5px;top:499px;width:157px;height:0.5px;background:#e4e4e4;"></div>
<div style="position:absolute;left:351px;top:479px;font-size:6.5px;line-height:8.5px;color:#333;white-space:nowrap;">状态机1</div>
<div style="position:absolute;left:362.5px;top:489.3px;font-size:6.7px;line-height:8.7px;color:#4a5a88;white-space:nowrap;">inrange:bool...</div>
<svg width="500" height="567" viewBox="0 0 500 567">
<path d="M337.2 481.6v2.6h-2.6z" fill="#555"/>
<rect x="340.6" y="479.8" width="6" height="5.6" fill="#e8ecc8" stroke="#7a8a3a" stroke-width="0.7"/><path d="M342 484l1.2 -2 1.2 1.2 1.2 -1.8" stroke="#5a6a2a" stroke-width="0.6" fill="none"/>
<rect x="350.6" y="490.6" width="7" height="5.4" fill="#fff" stroke="#5a8ac8" stroke-width="0.7"/><path d="M353 493.4h3" stroke="#5a8ac8" stroke-width="0.6"/>
</svg>
<div style="position:absolute;left:495px;top:453px;width:51px;height:12.3px;background:#f0f0f0;"></div>
<div style="position:absolute;left:500.5px;top:455.6px;font-size:6.6px;line-height:8.6px;color:#111;white-space:nowrap;font-weight:bold">事件</div>
<div style="position:absolute;left:495px;top:465.3px;width:157.6px;height:96.7px;background:#fff;border:0.6px solid #c4c4c4"></div>
<div style="position:absolute;left:495.5px;top:466px;width:156.6px;height:11.7px;background:#f0f0f0;border-bottom:0.6px solid #d0d0d0"></div>
<div style="position:absolute;left:573.5px;top:466px;width:0.6px;height:34.5px;background:#d4d4d4;"></div>
<div style="position:absolute;left:528px;top:468px;font-size:6.3px;line-height:8.3px;color:#333;white-space:nowrap;">名称</div>
<div style="position:absolute;left:606px;top:468px;font-size:6.3px;line-height:8.3px;color:#333;white-space:nowrap;">动作</div>
<div style="position:absolute;left:495.5px;top:488.5px;width:156.6px;height:0.5px;background:#e4e4e4;"></div>
<div style="position:absolute;left:495.5px;top:500.5px;width:156.6px;height:0.5px;background:#e4e4e4;"></div>
<div style="position:absolute;left:574.5px;top:490.3px;width:77.3px;height:10px;background:#ececec;border:0.6px solid #c0c0c0"></div>
<div style="position:absolute;left:607.5px;top:491.3px;font-size:6.3px;line-height:8.3px;color:#555;white-space:nowrap;">激活</div>
<div style="position:absolute;left:517px;top:479.5px;font-size:6.5px;line-height:8.5px;color:#333;white-space:nowrap;">状态机1</div>
<div style="position:absolute;left:527.5px;top:491px;font-size:6.5px;line-height:8.5px;color:#222;white-space:nowrap;">舰载雷达状...</div>
<svg width="660" height="567" viewBox="0 0 660 567">
<path d="M502.2 483v2.6h-2.6z" fill="#555"/>
<rect x="505.6" y="481" width="7" height="6" fill="#eef0d0" stroke="#b8c088" stroke-width="0.7"/><path d="M507.5 485.8l1.5 -2.5 1.5 1.5 1 -1" stroke="#7a8a3a" stroke-width="0.6" fill="none"/>
<rect x="515.5" y="492.5" width="7" height="5.6" fill="#fff" stroke="#666" stroke-width="0.6"/><path d="M520.6 494v2.6h-2.4z" fill="#666"/>
</svg>
<div style="position:absolute;left:655px;top:0px;width:387px;height:567px;background:#cdcdcd;"></div>
<div style="position:absolute;left:655px;top:556px;width:387px;height:11px;background:linear-gradient(#8a8a8a,#8a8a8a 55%,#b4b4b4);"></div>
<div style="position:absolute;left:652px;top:0px;width:4px;height:562px;background:linear-gradient(90deg,rgba(0,0,0,0),rgba(0,0,0,0.12) 40%,rgba(0,0,0,0.55));"></div>
<div style="position:absolute;left:655.7px;top:-2px;width:386.6px;height:563.4px;background:#aabedd;border:1.1px solid #232f50;border-radius:0 0 4px 4px;border-right-color:#6a7078"></div>
<div style="position:absolute;left:660.3px;top:14px;width:378px;height:544px;background:#e4e4e4;border:0.7px solid #8c96a4"></div>
<div style="position:absolute;left:656.8px;top:0px;width:383.4px;height:14.7px;background:linear-gradient(#5e7bb0,#4c689e 45%,#5f7cb2 75%,#90a8d0);"></div>
<div style="position:absolute;left:662px;top:1.5px;width:252px;height:11px;background:rgba(255,255,255,0.72);filter:blur(3.5px);border-radius:6px"></div>
<div style="position:absolute;left:656.8px;top:0px;width:40px;height:14.7px;background:linear-gradient(90deg,rgba(200,215,240,0.5),rgba(200,215,240,0));"></div>
<div style="position:absolute;left:672px;top:2.2px;font-size:7.05px;line-height:9.05px;color:#000;white-space:nowrap;text-shadow:0 0 2.5px rgba(255,255,255,0.9),0 0 4px rgba(255,255,255,0.7)">MissileDefense4 - STK 11 - Movie Timeline v11.2 - [3D Graphics 1 - Earth]</div>
<div style="position:absolute;left:981.4px;top:-1px;width:30.6px;height:9.6px;background:linear-gradient(#c4d0e4 0,#aebcd6 48%,#7088b2 52%,#8ea4c8);border:0.7px solid #2a3a5a;border-radius:0 0 0 3px"></div>
<div style="position:absolute;left:997px;top:-1px;width:0.7px;height:9.5px;background:#2a3a5a;"></div>
<div style="position:absolute;left:1012px;top:-1px;width:25.8px;height:9.6px;background:linear-gradient(#e4b0a0 0,#d88a74 48%,#c03c18 52%,#d06038);border:0.7px solid #3a2a3a;border-radius:0 0 3px 0"></div>
<div style="position:absolute;left:986.5px;top:4.3px;width:6px;height:1.6px;background:#fff;box-shadow:0 0 1px #123"></div>
<div style="position:absolute;left:1001.5px;top:1.6px;width:6px;height:4.6px;background:transparent;border:1px solid #fff;border-top-width:1.6px;box-shadow:0 0 1px #123"></div>
<div style="position:absolute;left:1021.5px;top:-2.2px;font-size:8.5px;line-height:10.5px;color:#fff;white-space:nowrap;font-weight:bold;text-shadow:0 0 1.2px #123,0 0 1px #123">x</div>
<div style="position:absolute;left:661px;top:14.7px;width:376.5px;height:14px;background:#fff;"></div>
<div style="position:absolute;left:661px;top:28.7px;width:376.5px;height:1.2px;background:#d4d8e0;"></div>
<div style="position:absolute;left:661px;top:29.9px;width:376.5px;height:2px;background:#f0f0f0;"></div>
<div style="position:absolute;left:669px;top:18px;font-size:6.6px;line-height:8.6px;color:#666;white-space:nowrap;">Search</div>
<div style="position:absolute;left:808px;top:15.5px;width:4.5px;height:13px;background:#e4e4e4;"></div>
<div style="position:absolute;left:813.2px;top:15.5px;width:0.8px;height:13px;background:#c0c0c0;"></div>
<div style="position:absolute;left:663.1px;top:32px;width:370.8px;height:387.4px;background:#000;"></div>
<div style="position:absolute;left:661px;top:419.4px;width:376.5px;height:16.6px;background:#fff;"></div>
<div style="position:absolute;left:661px;top:436px;width:376.5px;height:1.4px;background:#dcdcdc;"></div>
<div style="position:absolute;left:662.3px;top:422.3px;width:49.5px;height:12px;background:#fafafa;border:0.7px solid #c4c4c4;border-left-color:#e0e0e0;border-top-color:#e8e8e8"></div>
<div style="position:absolute;left:673.3px;top:425.4px;font-size:6px;line-height:8px;color:#222;white-space:nowrap;font-family:'Liberation Mono','DejaVu Sans Mono',monospace;letter-spacing:-0.5px">3D Graph...</div>
<div style="position:absolute;left:661px;top:437.4px;width:376.5px;height:13.8px;background:linear-gradient(#f0f2e2,#e2e5cc 50%,#cfd3ae);border-bottom:0.8px solid #a8a890"></div>
<div style="position:absolute;left:661.5px;top:441px;font-size:6.9px;line-height:8.9px;color:#20203a;white-space:nowrap;font-weight:bold">Movie Timeline v11.2</div>
<div style="position:absolute;left:661px;top:451.2px;width:376.5px;height:15.3px;background:#f4f4f4;"></div>
<div style="position:absolute;left:662.8px;top:452.8px;width:53.5px;height:13.7px;background:#f2f2f2;border:0.6px solid #c8c8c8;border-bottom-color:#555"></div>
<div style="position:absolute;left:716.3px;top:452px;width:318.3px;height:14.5px;background:linear-gradient(#fff,#f4f4f4 60%,#dcdcdc);border:0.6px solid #888"></div>
<div style="position:absolute;left:662.8px;top:466.5px;width:371.8px;height:67.5px;background:#a9a9a9;"></div>
<div style="position:absolute;left:716.3px;top:466.5px;width:114px;height:34px;background:#e6e6e6;"></div>
<div style="position:absolute;left:662.8px;top:466.5px;width:53.5px;height:13px;background:#f0f0f0;"></div>
<div style="position:absolute;left:675.8px;top:479.5px;width:40.5px;height:10.5px;background:#ffffe1;border:0.6px solid #999"></div>
<div style="position:absolute;left:675.8px;top:490px;width:40.5px;height:10.5px;background:#ffffe1;border:0.6px solid #999"></div>
<div style="position:absolute;left:662.8px;top:479.5px;width:13px;height:21px;background:#fcfcec;"></div>
<div style="position:absolute;left:661px;top:466px;width:1.8px;height:79px;background:#8c8c8c;"></div>
<div style="position:absolute;left:662.8px;top:479.3px;width:371.8px;height:0.7px;background:#7c7c7c;"></div>
<div style="position:absolute;left:662.8px;top:489.7px;width:371.8px;height:0.7px;background:#7c7c7c;"></div>
<div style="position:absolute;left:662.8px;top:500.3px;width:371.8px;height:0.7px;background:#7c7c7c;"></div>
<div style="position:absolute;left:716px;top:466.5px;width:0.8px;height:34px;background:#555;"></div>
<div style="position:absolute;left:662.8px;top:534px;width:371.8px;height:10.9px;background:#f4f4f4;border-top:0.7px solid #888;border-bottom:0.7px solid #888"></div>
<div style="position:absolute;left:717px;top:534.8px;width:14px;height:9.6px;background:#3a6ac8;border:0.6px solid #2a4a98"></div>
<div style="position:absolute;left:1023.3px;top:534.5px;width:0.7px;height:11px;background:#999;"></div>
<div style="position:absolute;left:1033.9px;top:32px;width:1.2px;height:388px;background:#fff;"></div>
<div style="position:absolute;left:661px;top:544.9px;width:376.5px;height:12.5px;background:#f2f2f2;"></div>
<div style="position:absolute;left:695px;top:549.8px;font-size:6.4px;line-height:8.4px;color:#222;white-space:nowrap;">MissileDefense4</div>
<div style="position:absolute;left:854px;top:549.8px;font-size:6.6px;line-height:8.6px;color:#222;white-space:nowrap;">1125.315</div>
<div style="position:absolute;left:945.5px;top:549.8px;font-size:6.5px;line-height:8.5px;color:#222;white-space:nowrap;">Time Step: 0.0167 min</div>
<div style="position:absolute;left:666.5px;top:547.2px;width:0.8px;height:9px;background:#a8a870;"></div>
<div style="position:absolute;left:690.5px;top:547.2px;width:0.8px;height:9px;background:#a8a870;"></div>
<div style="position:absolute;left:750.5px;top:547.2px;width:0.8px;height:9px;background:#a8a870;"></div>
<div style="position:absolute;left:851px;top:547.2px;width:0.8px;height:9px;background:#a8a870;"></div>
<div style="position:absolute;left:942px;top:547.2px;width:0.8px;height:9px;background:#a8a870;"></div>
<div style="position:absolute;left:666.5px;top:470.6px;font-size:6.3px;line-height:8.3px;color:#222;white-space:nowrap;font-family:'Liberation Mono','DejaVu Sans Mono',monospace;letter-spacing:-0.7px">Movie 01</div>
<div style="position:absolute;left:684.5px;top:481.2px;font-size:6px;line-height:8px;color:#222;white-space:nowrap;font-family:'Liberation Mono','DejaVu Sans Mono',monospace;letter-spacing:-0.7px">Time step</div>
<div style="position:absolute;left:694.5px;top:491.6px;font-size:6px;line-height:8px;color:#222;white-space:nowrap;font-family:'Liberation Mono','DejaVu Sans Mono',monospace;letter-spacing:-0.7px">Camera</div>
<div style="position:absolute;left:721.5px;top:470.6px;font-size:6.3px;line-height:8.3px;color:#222;white-space:nowrap;font-family:'Liberation Mono','DejaVu Sans Mono',monospace;letter-spacing:-0.7px">3D Window 1</div>
<div style="position:absolute;left:734px;top:481.3px;font-size:5.8px;line-height:7.8px;color:#333;white-space:nowrap;font-family:'Liberation Mono','DejaVu Sans Mono',monospace;letter-spacing:-0.7px">3.0 sec</div>
<div style="position:absolute;left:774.5px;top:481.3px;font-size:5.8px;line-height:7.8px;color:#333;white-space:nowrap;font-family:'Liberation Mono','DejaVu Sans Mono',monospace;letter-spacing:-0.7px">1.0 sec</div>
<div style="position:absolute;left:719.5px;top:491.7px;font-size:5.8px;line-height:7.8px;color:#333;white-space:nowrap;font-family:'Liberation Mono','DejaVu Sans Mono',monospace;letter-spacing:-0.7px">v</div>
<div style="position:absolute;left:736px;top:491.7px;font-size:5.8px;line-height:7.8px;color:#333;white-space:nowrap;font-family:'Liberation Mono','DejaVu Sans Mono',monospace;letter-spacing:-0.7px">view2</div>
<div style="position:absolute;left:795px;top:491.7px;font-size:5.8px;line-height:7.8px;color:#333;white-space:nowrap;font-family:'Liberation Mono','DejaVu Sans Mono',monospace;letter-spacing:-0.7px">v</div>
<div style="position:absolute;left:816.5px;top:491.7px;font-size:5.8px;line-height:7.8px;color:#333;white-space:nowrap;font-family:'Liberation Mono','DejaVu Sans Mono',monospace;letter-spacing:-0.7px">view3</div>
<svg width="1042" height="567" viewBox="0 0 1042 567">
<defs>
<clipPath id="vw"><rect x="663.1" y="32" width="370.8" height="387.4"/></clipPath>
<radialGradient id="fl"><stop offset="0" stop-color="#ffb030" stop-opacity="0.95"/><stop offset="0.35" stop-color="#d07010" stop-opacity="0.6"/><stop offset="1" stop-color="#a04000" stop-opacity="0"/></radialGradient>
<radialGradient id="fl2"><stop offset="0" stop-color="#ffc040" stop-opacity="0.9"/><stop offset="1" stop-color="#ff9010" stop-opacity="0"/></radialGradient>
<radialGradient id="tl"><stop offset="0" stop-color="#1a7a90" stop-opacity="0.5"/><stop offset="1" stop-color="#0a4050" stop-opacity="0"/></radialGradient>
<radialGradient id="ic"><stop offset="0" stop-color="#fff"/><stop offset="1" stop-color="#8aa8e0"/></radialGradient>
</defs>
<g clip-path="url(#vw)">
<rect x="830.8" y="248.6" width="1.9" height="1.9" fill="#fff" opacity="1"/><rect x="851.4" y="259.3" width="1" height="1" fill="#fff" opacity="1"/><rect x="839.5" y="269.6" width="1" height="1" fill="#fff" opacity="0.6"/><rect x="828.7" y="86.9" width="0.9" height="0.9" fill="#fff" opacity="1"/><rect x="1027.4" y="405.4" width="1" height="1" fill="#fff" opacity="1"/><rect x="668.6" y="236.5" width="0.9" height="0.9" fill="#fff" opacity="0.6"/><rect x="733.6" y="125.6" width="0.9" height="0.9" fill="#fff" opacity="1"/><rect x="784.1" y="260.7" width="1.1" height="1.1" fill="#fff" opacity="1"/><rect x="749.7" y="145.8" width="0.9" height="0.9" fill="#fff" opacity="0.6"/><rect x="832.7" y="139.6" width="1" height="1" fill="#fff" opacity="0.85"/><rect x="780.0" y="120.9" width="1.2" height="1.2" fill="#fff" opacity="0.6"/><rect x="689.1" y="328.6" width="1.5" height="1.5" fill="#fff" opacity="0.6"/><rect x="977.1" y="181.6" width="0.9" height="0.9" fill="#fff" opacity="0.6"/><rect x="742.2" y="390.8" width="0.9" height="0.9" fill="#fff" opacity="1"/><rect x="802.3" y="306.3" width="1.5" height="1.5" fill="#fff" opacity="0.6"/><rect x="873.1" y="108.8" width="1.2" height="1.2" fill="#fff" opacity="0.85"/><rect x="695.3" y="160.7" width="1.5" height="1.5" fill="#fff" opacity="0.6"/><rect x="712.9" y="305.6" width="0.9" height="0.9" fill="#fff" opacity="0.6"/><rect x="835.5" y="220.4" width="1.1" height="1.1" fill="#fff" opacity="1"/><rect x="851.8" y="413.3" width="1" height="1" fill="#fff" opacity="1"/><rect x="901.8" y="77.1" width="1.5" height="1.5" fill="#fff" opacity="0.75"/><rect x="663.2" y="366.5" width="1.2" height="1.2" fill="#fff" opacity="0.6"/><rect x="741.2" y="184.6" width="1" height="1" fill="#fff" opacity="0.6"/><rect x="1030.0" y="114.5" width="1.2" height="1.2" fill="#fff" opacity="0.6"/><rect x="949.7" y="159.3" width="1.2" height="1.2" fill="#fff" opacity="1"/><rect x="690.2" y="66.9" width="1.1" height="1.1" fill="#fff" opacity="0.6"/><rect x="886.1" y="175.8" width="1.9" height="1.9" fill="#fff" opacity="0.75"/><rect x="1018.8" y="219.2" width="1" height="1" fill="#fff" opacity="1"/><rect x="730.8" y="91.7" width="1.1" height="1.1" fill="#fff" opacity="1"/><rect x="755.6" y="105.5" width="1.1" height="1.1" fill="#fff" opacity="1"/><rect x="990.3" y="265.6" width="1.5" height="1.5" fill="#fff" opacity="0.6"/><rect x="701.5" y="47.0" width="1.2" height="1.2" fill="#fff" opacity="0.75"/><rect x="937.5" y="183.6" width="1.5" height="1.5" fill="#fff" opacity="1"/><rect x="845.2" y="233.3" width="1" height="1" fill="#fff" opacity="0.75"/><rect x="747.7" y="248.5" width="1" height="1" fill="#fff" opacity="0.85"/><rect x="741.8" y="386.1" width="0.9" height="0.9" fill="#fff" opacity="0.6"/><rect x="762.9" y="204.5" width="0.9" height="0.9" fill="#fff" opacity="0.6"/><rect x="728.4" y="174.7" width="1" height="1" fill="#fff" opacity="0.6"/><rect x="797.4" y="376.8" width="1.3" height="1.3" fill="#fff" opacity="1"/><rect x="879.8" y="86.3" width="0.9" height="0.9" fill="#fff" opacity="0.6"/><rect x="839.1" y="170.3" width="1.2" height="1.2" fill="#fff" opacity="0.6"/><rect x="670.9" y="278.2" width="1.9" height="1.9" fill="#fff" opacity="0.6"/><rect x="934.0" y="155.4" width="1" height="1" fill="#fff" opacity="0.6"/><rect x="831.1" y="174.3" width="0.9" height="0.9" fill="#fff" opacity="0.75"/><rect x="957.3" y="386.1" width="1.3" height="1.3" fill="#fff" opacity="0.6"/><rect x="917.2" y="380.6" width="1.5" height="1.5" fill="#fff" opacity="0.6"/><rect x="983.3" y="253.7" width="1.5" height="1.5" fill="#fff" opacity="1"/><rect x="879.2" y="267.6" width="1" height="1" fill="#fff" opacity="0.6"/><rect x="900.2" y="416.4" width="1.5" height="1.5" fill="#fff" opacity="0.85"/><rect x="807.1" y="316.5" width="1.9" height="1.9" fill="#fff" opacity="1"/><rect x="834.6" y="241.5" width="0.9" height="0.9" fill="#fff" opacity="0.85"/><rect x="886.1" y="218.1" width="1.1" height="1.1" fill="#fff" opacity="0.6"/><rect x="847.5" y="269.8" width="1.9" height="1.9" fill="#fff" opacity="0.85"/><rect x="995.6" y="174.4" width="1" height="1" fill="#fff" opacity="1"/><rect x="738.2" y="97.6" width="1.3" height="1.3" fill="#fff" opacity="1"/><rect x="847.9" y="125.5" width="1.5" height="1.5" fill="#fff" opacity="0.85"/><rect x="736.6" y="198.8" width="1.1" height="1.1" fill="#fff" opacity="0.75"/><rect x="805.6" y="257.7" width="1.3" height="1.3" fill="#fff" opacity="0.75"/><rect x="713.5" y="224.1" width="0.9" height="0.9" fill="#fff" opacity="0.6"/><rect x="1015.5" y="139.1" width="1" height="1" fill="#fff" opacity="0.6"/><rect x="830.2" y="138.5" width="1.1" height="1.1" fill="#fff" opacity="1"/><rect x="804.9" y="233.2" width="1.3" height="1.3" fill="#fff" opacity="1"/><rect x="830.9" y="60.9" width="0.9" height="0.9" fill="#fff" opacity="0.85"/><rect x="986.8" y="48.1" width="1.2" height="1.2" fill="#fff" opacity="1"/><rect x="794.4" y="283.3" width="0.9" height="0.9" fill="#fff" opacity="0.75"/><rect x="813.3" y="105.5" width="1.2" height="1.2" fill="#fff" opacity="0.75"/><rect x="952.1" y="340.4" width="1" height="1" fill="#fff" opacity="1"/><rect x="703.4" y="239.2" width="1.3" height="1.3" fill="#fff" opacity="0.6"/><rect x="916.9" y="109.1" width="1.9" height="1.9" fill="#fff" opacity="0.85"/><rect x="729.3" y="36.2" width="1.9" height="1.9" fill="#fff" opacity="1"/><rect x="928.0" y="101.3" width="1.2" height="1.2" fill="#fff" opacity="0.85"/><rect x="863.2" y="398.4" width="1" height="1" fill="#fff" opacity="1"/><rect x="977.9" y="302.8" width="1.1" height="1.1" fill="#fff" opacity="0.6"/><rect x="815.3" y="377.5" width="1.5" height="1.5" fill="#fff" opacity="0.75"/><rect x="830.1" y="108.2" width="0.9" height="0.9" fill="#fff" opacity="1"/><rect x="867.1" y="284.6" width="1.3" height="1.3" fill="#fff" opacity="1"/><rect x="784.1" y="412.2" width="1" height="1" fill="#fff" opacity="0.6"/><rect x="742.1" y="380.3" width="1" height="1" fill="#fff" opacity="0.85"/><rect x="862.2" y="338.0" width="1.3" height="1.3" fill="#fff" opacity="0.85"/><rect x="1000.6" y="363.2" width="1.3" height="1.3" fill="#fff" opacity="1"/><rect x="693.7" y="202.6" width="1.5" height="1.5" fill="#fff" opacity="0.85"/><rect x="843.8" y="43.0" width="1" height="1" fill="#fff" opacity="1"/><rect x="959.7" y="98.9" width="1.3" height="1.3" fill="#fff" opacity="0.75"/><rect x="837.6" y="418.9" width="1.9" height="1.9" fill="#fff" opacity="1"/><rect x="877.8" y="298.7" width="1.1" height="1.1" fill="#fff" opacity="1"/><rect x="858.4" y="144.3" width="1" height="1" fill="#fff" opacity="1"/><rect x="853.8" y="383.1" width="1.2" height="1.2" fill="#fff" opacity="0.85"/><rect x="912.1" y="401.5" width="1.1" height="1.1" fill="#fff" opacity="0.85"/><rect x="978.6" y="406.8" width="1.2" height="1.2" fill="#fff" opacity="1"/><rect x="847.6" y="191.1" width="1" height="1" fill="#fff" opacity="1"/><rect x="664.8" y="177.9" width="0.9" height="0.9" fill="#fff" opacity="1"/><rect x="1003.3" y="242.5" width="1" height="1" fill="#fff" opacity="1"/><rect x="697.6" y="96.5" width="1.9" height="1.9" fill="#fff" opacity="1"/><rect x="1004.6" y="341.8" width="1.5" height="1.5" fill="#fff" opacity="0.85"/><rect x="754.4" y="222.8" width="1.3" height="1.3" fill="#fff" opacity="1"/><rect x="997.2" y="394.1" width="1.9" height="1.9" fill="#fff" opacity="1"/><rect x="780.7" y="106.1" width="0.9" height="0.9" fill="#fff" opacity="0.85"/><rect x="711.0" y="333.6" width="0.9" height="0.9" fill="#fff" opacity="0.6"/><rect x="735.0" y="119.9" width="1.2" height="1.2" fill="#fff" opacity="0.85"/><rect x="931.5" y="126.6" width="1.9" height="1.9" fill="#fff" opacity="0.6"/><rect x="848.4" y="257.3" width="1.2" height="1.2" fill="#fff" opacity="0.75"/><rect x="923.2" y="372.1" width="0.9" height="0.9" fill="#fff" opacity="1"/><rect x="897.8" y="351.3" width="1" height="1" fill="#fff" opacity="1"/><rect x="738.8" y="276.3" width="1.1" height="1.1" fill="#fff" opacity="1"/><rect x="743.2" y="242.1" width="1" height="1" fill="#fff" opacity="0.75"/><rect x="1002.4" y="275.0" width="1.3" height="1.3" fill="#fff" opacity="0.75"/><rect x="780.2" y="153.9" width="1.1" height="1.1" fill="#fff" opacity="0.75"/><rect x="951.8" y="107.3" width="1" height="1" fill="#fff" opacity="0.75"/><rect x="992.8" y="83.3" width="1" height="1" fill="#fff" opacity="0.85"/><rect x="806.9" y="200.3" width="1.5" height="1.5" fill="#fff" opacity="1"/><rect x="956.1" y="80.8" width="1.5" height="1.5" fill="#fff" opacity="0.6"/><rect x="698.6" y="252.6" width="1.3" height="1.3" fill="#fff" opacity="0.85"/><rect x="705.8" y="227.7" width="1.3" height="1.3" fill="#fff" opacity="1"/><rect x="1033.5" y="354.4" width="1" height="1" fill="#fff" opacity="1"/><rect x="702.4" y="46.5" width="1.9" height="1.9" fill="#fff" opacity="0.75"/><rect x="733.3" y="76.5" width="1" height="1" fill="#fff" opacity="0.75"/><rect x="1030.4" y="390.7" width="1" height="1" fill="#fff" opacity="1"/><rect x="686.0" y="400.2" width="1.9" height="1.9" fill="#fff" opacity="0.6"/><rect x="946.7" y="158.5" width="1.9" height="1.9" fill="#fff" opacity="1"/><rect x="854.2" y="198.4" width="1.3" height="1.3" fill="#fff" opacity="0.6"/><rect x="898.2" y="47.8" width="1.1" height="1.1" fill="#fff" opacity="0.75"/><rect x="814.4" y="171.2" width="1.3" height="1.3" fill="#fff" opacity="1"/><rect x="1005.0" y="266.1" width="1" height="1" fill="#fff" opacity="1"/><rect x="957.0" y="157.3" width="1" height="1" fill="#fff" opacity="1"/><rect x="874.4" y="105.9" width="1.3" height="1.3" fill="#fff" opacity="0.85"/><rect x="766.7" y="77.0" width="1" height="1" fill="#fff" opacity="1"/><rect x="712.4" y="159.7" width="1.3" height="1.3" fill="#fff" opacity="1"/><rect x="946.9" y="189.0" width="1" height="1" fill="#fff" opacity="0.6"/><rect x="958.8" y="148.8" width="1" height="1" fill="#fff" opacity="0.6"/><rect x="992.5" y="415.4" width="0.9" height="0.9" fill="#fff" opacity="0.75"/><rect x="764.3" y="404.1" width="1.2" height="1.2" fill="#fff" opacity="0.85"/><rect x="743.2" y="189.2" width="1" height="1" fill="#fff" opacity="1"/><rect x="691.5" y="231.2" width="1.9" height="1.9" fill="#fff" opacity="0.75"/><rect x="923.2" y="326.8" width="0.9" height="0.9" fill="#fff" opacity="0.6"/><rect x="891.3" y="317.9" width="1.2" height="1.2" fill="#fff" opacity="1"/><rect x="812.0" y="51.5" width="1.1" height="1.1" fill="#fff" opacity="1"/><rect x="667.0" y="132.1" width="1.2" height="1.2" fill="#fff" opacity="0.85"/><rect x="867.1" y="228.5" width="1" height="1" fill="#fff" opacity="1"/><rect x="963.3" y="61.5" width="0.9" height="0.9" fill="#fff" opacity="1"/><rect x="1008.1" y="93.9" width="1.9" height="1.9" fill="#fff" opacity="0.75"/><rect x="980.5" y="241.7" width="0.9" height="0.9" fill="#fff" opacity="1"/><rect x="1013.7" y="194.8" width="1.5" height="1.5" fill="#fff" opacity="1"/><rect x="778.9" y="237.3" width="1.9" height="1.9" fill="#fff" opacity="0.85"/><rect x="871.0" y="141.7" width="1.2" height="1.2" fill="#fff" opacity="0.6"/><rect x="668.2" y="126.8" width="0.9" height="0.9" fill="#fff" opacity="0.75"/><rect x="814.7" y="296.8" width="0.9" height="0.9" fill="#fff" opacity="0.85"/><rect x="940.6" y="51.4" width="1.3" height="1.3" fill="#fff" opacity="0.6"/><rect x="958.9" y="118.6" width="1.9" height="1.9" fill="#fff" opacity="0.85"/><rect x="1024.0" y="126.3" width="1" height="1" fill="#fff" opacity="1"/><rect x="716.6" y="403.5" width="1.1" height="1.1" fill="#fff" opacity="1"/><rect x="925.1" y="51.5" width="1.5" height="1.5" fill="#fff" opacity="1"/><rect x="706.8" y="365.3" width="1.3" height="1.3" fill="#fff" opacity="1"/><rect x="720.4" y="172.6" width="1" height="1" fill="#fff" opacity="1"/><rect x="832.0" y="133.4" width="1.5" height="1.5" fill="#fff" opacity="0.85"/><rect x="951.6" y="237.4" width="1" height="1" fill="#fff" opacity="0.85"/><rect x="935.4" y="124.3" width="1" height="1" fill="#fff" opacity="1"/><rect x="994.2" y="335.5" width="1.3" height="1.3" fill="#fff" opacity="0.85"/><rect x="763.7" y="297.1" width="1.1" height="1.1" fill="#fff" opacity="0.85"/><rect x="942.5" y="105.5" width="1.1" height="1.1" fill="#fff" opacity="1"/><rect x="1026.5" y="386.4" width="0.9" height="0.9" fill="#fff" opacity="0.6"/><rect x="666.5" y="132.4" width="0.9" height="0.9" fill="#fff" opacity="1"/><rect x="677.1" y="118.1" width="1.2" height="1.2" fill="#fff" opacity="0.6"/><rect x="943.4" y="385.3" width="1" height="1" fill="#fff" opacity="1"/><rect x="750.1" y="411.8" width="1.9" height="1.9" fill="#fff" opacity="1"/><rect x="794.4" y="162.9" width="1.9" height="1.9" fill="#fff" opacity="0.75"/><rect x="974.1" y="60.8" width="1" height="1" fill="#fff" opacity="1"/><rect x="963.2" y="273.4" width="1.1" height="1.1" fill="#fff" opacity="1"/><rect x="820.4" y="131.9" width="1" height="1" fill="#fff" opacity="0.85"/><rect x="719.9" y="355.7" width="1.3" height="1.3" fill="#fff" opacity="0.85"/><rect x="866.5" y="320.7" width="1" height="1" fill="#fff" opacity="1"/><rect x="905.6" y="256.7" width="1.9" height="1.9" fill="#fff" opacity="0.85"/><rect x="692.1" y="64.1" width="1.9" height="1.9" fill="#fff" opacity="1"/><rect x="773.9" y="332.1" width="1" height="1" fill="#fff" opacity="0.85"/><rect x="742.1" y="288.2" width="1" height="1" fill="#fff" opacity="0.85"/><rect x="846.6" y="327.7" width="1.3" height="1.3" fill="#fff" opacity="0.85"/><rect x="990.1" y="116.7" width="1.3" height="1.3" fill="#fff" opacity="0.85"/><rect x="999.2" y="156.8" width="1.9" height="1.9" fill="#fff" opacity="1"/><rect x="883.7" y="381.2" width="1.2" height="1.2" fill="#fff" opacity="1"/><rect x="859.7" y="416.0" width="1.9" height="1.9" fill="#fff" opacity="0.85"/><rect x="745.1" y="406.5" width="1.1" height="1.1" fill="#fff" opacity="0.6"/><rect x="797.2" y="173.5" width="1.3" height="1.3" fill="#fff" opacity="1"/><rect x="880.0" y="340.1" width="1.3" height="1.3" fill="#fff" opacity="1"/><rect x="863.5" y="355.7" width="1" height="1" fill="#fff" opacity="0.75"/><rect x="696.3" y="207.8" width="1.2" height="1.2" fill="#fff" opacity="0.6"/><rect x="745.1" y="54.3" width="1" height="1" fill="#fff" opacity="1"/><rect x="772.8" y="40.6" width="1.5" height="1.5" fill="#fff" opacity="0.6"/><rect x="878.9" y="150.2" width="1" height="1" fill="#fff" opacity="0.85"/><rect x="693.3" y="317.2" width="1.3" height="1.3" fill="#fff" opacity="0.6"/><rect x="672.6" y="284.9" width="1" height="1" fill="#fff" opacity="1"/><rect x="754.1" y="117.3" width="1.3" height="1.3" fill="#fff" opacity="1"/><rect x="809.3" y="162.7" width="1.3" height="1.3" fill="#fff" opacity="0.75"/><rect x="846.1" y="240.0" width="1" height="1" fill="#fff" opacity="1"/><rect x="1002.5" y="190.9" width="1.3" height="1.3" fill="#fff" opacity="0.6"/><rect x="962.0" y="354.7" width="1.9" height="1.9" fill="#fff" opacity="1"/><rect x="900.5" y="234.7" width="0.9" height="0.9" fill="#fff" opacity="0.6"/><rect x="819.4" y="194.7" width="1" height="1" fill="#fff" opacity="0.75"/><rect x="938.0" y="415.5" width="1.5" height="1.5" fill="#fff" opacity="0.75"/><rect x="782.0" y="182.7" width="1.2" height="1.2" fill="#fff" opacity="0.85"/><rect x="1022.8" y="54.9" width="1.2" height="1.2" fill="#fff" opacity="0.6"/><rect x="775.6" y="92.2" width="1" height="1" fill="#fff" opacity="0.6"/><rect x="942.4" y="38.6" width="1.9" height="1.9" fill="#fff" opacity="0.6"/><rect x="779.0" y="108.5" width="1.3" height="1.3" fill="#fff" opacity="0.75"/><rect x="881.3" y="264.2" width="1.9" height="1.9" fill="#fff" opacity="1"/><rect x="851.7" y="203.0" width="1.2" height="1.2" fill="#fff" opacity="1"/><rect x="727.0" y="325.2" width="1.2" height="1.2" fill="#fff" opacity="1"/><rect x="1012.5" y="245.0" width="1.2" height="1.2" fill="#fff" opacity="1"/><rect x="992.2" y="385.8" width="1.3" height="1.3" fill="#fff" opacity="1"/><rect x="949.3" y="67.8" width="1.1" height="1.1" fill="#fff" opacity="1"/><rect x="681.4" y="398.7" width="1.5" height="1.5" fill="#fff" opacity="1"/><rect x="957.8" y="331.6" width="0.9" height="0.9" fill="#fff" opacity="0.75"/><rect x="994.0" y="370.3" width="1.3" height="1.3" fill="#fff" opacity="1"/><rect x="958.6" y="308.0" width="1" height="1" fill="#fff" opacity="1"/><rect x="721.2" y="156.5" width="1.2" height="1.2" fill="#fff" opacity="1"/><rect x="711.6" y="319.0" width="1.2" height="1.2" fill="#fff" opacity="1"/><rect x="861.3" y="90.3" width="1" height="1" fill="#fff" opacity="0.6"/><rect x="738.8" y="386.6" width="1" height="1" fill="#fff" opacity="0.75"/><rect x="693.6" y="136.5" width="1" height="1" fill="#fff" opacity="1"/><rect x="920.4" y="64.1" width="1.2" height="1.2" fill="#fff" opacity="0.6"/><rect x="955.8" y="193.4" width="1" height="1" fill="#fff" opacity="1"/><rect x="740.3" y="242.3" width="1.9" height="1.9" fill="#fff" opacity="0.75"/><rect x="1014.2" y="405.0" width="1.3" height="1.3" fill="#fff" opacity="0.85"/><rect x="813.4" y="247.3" width="1.9" height="1.9" fill="#fff" opacity="0.6"/><rect x="796.5" y="297.9" width="1" height="1" fill="#fff" opacity="1"/><rect x="913.7" y="320.9" width="1" height="1" fill="#fff" opacity="1"/><rect x="667.6" y="177.9" width="1.9" height="1.9" fill="#fff" opacity="0.75"/><rect x="771.9" y="75.9" width="0.9" height="0.9" fill="#fff" opacity="0.75"/><rect x="997.5" y="90.9" width="1.5" height="1.5" fill="#fff" opacity="1"/><rect x="941.1" y="401.2" width="1.5" height="1.5" fill="#fff" opacity="1"/><rect x="910.3" y="131.2" width="1.1" height="1.1" fill="#fff" opacity="1"/><rect x="934.4" y="159.5" width="1.2" height="1.2" fill="#fff" opacity="1"/><rect x="837.3" y="279.8" width="1.9" height="1.9" fill="#fff" opacity="1"/><rect x="697.2" y="86.5" width="1" height="1" fill="#fff" opacity="0.75"/><rect x="914.4" y="306.1" width="1" height="1" fill="#fff" opacity="0.75"/><rect x="812.2" y="355.9" width="1" height="1" fill="#fff" opacity="0.6"/><rect x="747.1" y="92.8" width="1" height="1" fill="#fff" opacity="1"/><rect x="813.9" y="60.1" width="1.5" height="1.5" fill="#fff" opacity="1"/><rect x="714.6" y="111.5" width="1" height="1" fill="#fff" opacity="1"/><rect x="842.1" y="388.6" width="0.9" height="0.9" fill="#fff" opacity="1"/><rect x="890.5" y="155.0" width="1.1" height="1.1" fill="#fff" opacity="1"/><rect x="859.6" y="132.9" width="1.1" height="1.1" fill="#fff" opacity="0.85"/><rect x="776.8" y="202.8" width="1.5" height="1.5" fill="#fff" opacity="0.75"/><rect x="852.0" y="337.2" width="1" height="1" fill="#fff" opacity="1"/><rect x="927.7" y="130.3" width="1.2" height="1.2" fill="#fff" opacity="1"/><rect x="749.8" y="268.8" width="1" height="1" fill="#fff" opacity="1"/><rect x="927.7" y="413.9" width="1.1" height="1.1" fill="#fff" opacity="1"/><rect x="1013.6" y="274.7" width="1.1" height="1.1" fill="#fff" opacity="0.6"/><rect x="713.6" y="216.9" width="1.5" height="1.5" fill="#fff" opacity="0.85"/><rect x="785.1" y="391.5" width="1.3" height="1.3" fill="#fff" opacity="0.85"/><rect x="834.8" y="80.0" width="1" height="1" fill="#fff" opacity="0.75"/><rect x="998.4" y="242.3" width="1" height="1" fill="#fff" opacity="1"/><rect x="1002.5" y="97.2" width="1.3" height="1.3" fill="#fff" opacity="1"/><rect x="717.0" y="393.5" width="0.9" height="0.9" fill="#fff" opacity="0.85"/><rect x="917.2" y="172.7" width="1.3" height="1.3" fill="#fff" opacity="0.75"/><rect x="731.8" y="244.0" width="1" height="1" fill="#fff" opacity="1"/><rect x="674.9" y="101.7" width="1" height="1" fill="#fff" opacity="0.85"/><rect x="943.5" y="359.9" width="1.5" height="1.5" fill="#fff" opacity="1"/><rect x="882.6" y="343.1" width="0.9" height="0.9" fill="#fff" opacity="0.75"/><rect x="737.0" y="213.1" width="1" height="1" fill="#fff" opacity="1"/><rect x="806.3" y="252.4" width="1" height="1" fill="#fff" opacity="0.85"/><rect x="855.8" y="134.0" width="1.3" height="1.3" fill="#fff" opacity="0.6"/><rect x="901.1" y="46.7" width="1" height="1" fill="#fff" opacity="1"/><rect x="1018.9" y="264.2" width="1.9" height="1.9" fill="#fff" opacity="0.85"/><rect x="815.6" y="273.4" width="1.5" height="1.5" fill="#fff" opacity="0.85"/><rect x="843.2" y="416.9" width="1.5" height="1.5" fill="#fff" opacity="1"/><rect x="706.5" y="76.4" width="1.3" height="1.3" fill="#fff" opacity="1"/><rect x="856.2" y="194.7" width="0.9" height="0.9" fill="#fff" opacity="0.85"/><rect x="999.6" y="146.6" width="1.5" height="1.5" fill="#fff" opacity="1"/><rect x="884.7" y="323.0" width="1.2" height="1.2" fill="#fff" opacity="1"/><rect x="988.4" y="126.6" width="1.9" height="1.9" fill="#fff" opacity="0.75"/><rect x="849.5" y="185.5" width="0.9" height="0.9" fill="#fff" opacity="1"/><rect x="920.8" y="235.6" width="1.1" height="1.1" fill="#fff" opacity="1"/><rect x="776.6" y="185.1" width="1.1" height="1.1" fill="#fff" opacity="0.6"/><rect x="1033.7" y="314.8" width="1.3" height="1.3" fill="#fff" opacity="1"/><rect x="819.3" y="343.6" width="1.1" height="1.1" fill="#fff" opacity="1"/><rect x="873.3" y="381.6" width="1" height="1" fill="#fff" opacity="1"/><rect x="957.0" y="79.9" width="1.9" height="1.9" fill="#fff" opacity="0.6"/><rect x="772.9" y="313.8" width="0.9" height="0.9" fill="#fff" opacity="0.85"/><rect x="726.8" y="202.6" width="1.9" height="1.9" fill="#fff" opacity="1"/><rect x="810.4" y="170.0" width="1.1" height="1.1" fill="#fff" opacity="0.6"/><rect x="776.6" y="208.0" width="1.3" height="1.3" fill="#fff" opacity="0.85"/><rect x="783.3" y="87.4" width="1.9" height="1.9" fill="#fff" opacity="0.75"/><rect x="738.2" y="364.4" width="0.9" height="0.9" fill="#fff" opacity="0.75"/><rect x="780.2" y="364.5" width="1.9" height="1.9" fill="#fff" opacity="0.6"/><rect x="726.8" y="372.5" width="1.1" height="1.1" fill="#fff" opacity="1"/><rect x="897.6" y="106.1" width="0.9" height="0.9" fill="#fff" opacity="0.6"/><rect x="776.6" y="348.4" width="1.2" height="1.2" fill="#fff" opacity="1"/><rect x="927.6" y="84.2" width="1.9" height="1.9" fill="#fff" opacity="1"/><rect x="692.3" y="118.4" width="1.2" height="1.2" fill="#fff" opacity="0.6"/><rect x="926.6" y="108.0" width="1" height="1" fill="#fff" opacity="0.75"/><rect x="849.0" y="146.3" width="1.2" height="1.2" fill="#fff" opacity="0.85"/><rect x="961.2" y="234.9" width="1" height="1" fill="#fff" opacity="1"/><rect x="854.4" y="410.2" width="1" height="1" fill="#fff" opacity="0.75"/><rect x="765.7" y="279.7" width="1" height="1" fill="#fff" opacity="1"/><rect x="1027.7" y="202.4" width="1" height="1" fill="#fff" opacity="1"/><rect x="999.6" y="34.7" width="1.2" height="1.2" fill="#fff" opacity="1"/><rect x="756.1" y="342.8" width="1" height="1" fill="#fff" opacity="0.75"/><rect x="768.8" y="324.4" width="1.1" height="1.1" fill="#fff" opacity="0.75"/><rect x="766.5" y="244.1" width="1" height="1" fill="#fff" opacity="0.75"/><rect x="1029.5" y="45.0" width="1.9" height="1.9" fill="#fff" opacity="1"/><rect x="805.7" y="391.6" width="1.9" height="1.9" fill="#fff" opacity="0.6"/><rect x="729.7" y="247.2" width="1.3" height="1.3" fill="#fff" opacity="0.85"/><rect x="907.2" y="335.0" width="1.2" height="1.2" fill="#fff" opacity="1"/><rect x="969.8" y="277.6" width="1" height="1" fill="#fff" opacity="1"/><rect x="952.3" y="95.9" width="1.5" height="1.5" fill="#fff" opacity="0.75"/><rect x="911.0" y="244.0" width="1.2" height="1.2" fill="#fff" opacity="0.75"/><rect x="759.3" y="242.6" width="1.9" height="1.9" fill="#fff" opacity="0.85"/><rect x="676.1" y="263.0" width="0.9" height="0.9" fill="#fff" opacity="1"/><rect x="829.3" y="372.8" width="1.3" height="1.3" fill="#fff" opacity="0.75"/><rect x="888.7" y="267.5" width="1.5" height="1.5" fill="#fff" opacity="1"/><rect x="826.9" y="133.8" width="0.9" height="0.9" fill="#fff" opacity="0.6"/><rect x="705.4" y="101.0" width="1.1" height="1.1" fill="#fff" opacity="1"/><rect x="717.3" y="152.4" width="0.9" height="0.9" fill="#fff" opacity="0.85"/><rect x="967.1" y="317.8" width="1.2" height="1.2" fill="#fff" opacity="1"/><rect x="847.9" y="283.6" width="1" height="1" fill="#fff" opacity="1"/><rect x="757.5" y="93.8" width="1.9" height="1.9" fill="#fff" opacity="0.6"/><rect x="780.2" y="212.7" width="1.1" height="1.1" fill="#fff" opacity="0.6"/><rect x="710.6" y="324.3" width="1" height="1" fill="#fff" opacity="0.75"/><rect x="939.2" y="233.9" width="0.9" height="0.9" fill="#fff" opacity="0.6"/><rect x="752.3" y="376.5" width="1" height="1" fill="#fff" opacity="0.6"/><rect x="808.8" y="147.4" width="1.5" height="1.5" fill="#fff" opacity="0.6"/><rect x="1023.5" y="295.1" width="1.1" height="1.1" fill="#fff" opacity="0.85"/><rect x="756.9" y="245.6" width="1.1" height="1.1" fill="#fff" opacity="1"/><rect x="834.2" y="392.9" width="1.3" height="1.3" fill="#fff" opacity="0.85"/><rect x="788.0" y="411.7" width="1.1" height="1.1" fill="#fff" opacity="0.6"/><rect x="722.5" y="258.5" width="0.9" height="0.9" fill="#fff" opacity="0.85"/><rect x="873.5" y="384.9" width="1" height="1" fill="#fff" opacity="1"/><rect x="982.0" y="394.0" width="1.1" height="1.1" fill="#fff" opacity="1"/><rect x="803.5" y="51.1" width="1.5" height="1.5" fill="#fff" opacity="0.85"/><rect x="754.4" y="339.0" width="1" height="1" fill="#fff" opacity="1"/><rect x="738.6" y="115.0" width="1.9" height="1.9" fill="#fff" opacity="0.85"/><rect x="838.3" y="221.7" width="1" height="1" fill="#fff" opacity="1"/><rect x="738.9" y="180.2" width="1" height="1" fill="#fff" opacity="0.6"/><rect x="919.5" y="172.4" width="1.2" height="1.2" fill="#fff" opacity="1"/><rect x="669.9" y="102.5" width="1.2" height="1.2" fill="#fff" opacity="1"/><rect x="808.8" y="389.4" width="1.1" height="1.1" fill="#fff" opacity="0.85"/><rect x="701.4" y="54.2" width="1.3" height="1.3" fill="#fff" opacity="0.75"/><rect x="947.1" y="312.0" width="1" height="1" fill="#fff" opacity="0.6"/><rect x="1033.3" y="356.6" width="1.9" height="1.9" fill="#fff" opacity="0.6"/><rect x="980.0" y="179.6" width="1.2" height="1.2" fill="#fff" opacity="1"/><rect x="911.3" y="149.0" width="1.1" height="1.1" fill="#fff" opacity="1"/><rect x="678.1" y="90.4" width="1" height="1" fill="#fff" opacity="0.6"/><rect x="740.4" y="190.9" width="1.9" height="1.9" fill="#fff" opacity="1"/><rect x="920.5" y="232.1" width="1.2" height="1.2" fill="#fff" opacity="0.85"/><rect x="932.2" y="289.8" width="1" height="1" fill="#fff" opacity="0.75"/><rect x="972.6" y="239.0" width="1.9" height="1.9" fill="#fff" opacity="1"/><rect x="713.7" y="232.0" width="1.3" height="1.3" fill="#fff" opacity="0.75"/><rect x="701.1" y="175.4" width="1.1" height="1.1" fill="#fff" opacity="0.75"/><rect x="678.1" y="41.5" width="1.9" height="1.9" fill="#fff" opacity="1"/><rect x="667.2" y="326.8" width="1.2" height="1.2" fill="#fff" opacity="0.6"/><rect x="1004.0" y="115.7" width="1.3" height="1.3" fill="#fff" opacity="0.6"/><rect x="1017.4" y="368.1" width="1.1" height="1.1" fill="#fff" opacity="0.85"/><rect x="696.3" y="197.5" width="1.5" height="1.5" fill="#fff" opacity="1"/><rect x="685.3" y="180.4" width="1.3" height="1.3" fill="#fff" opacity="0.85"/><rect x="847.4" y="140.3" width="1" height="1" fill="#fff" opacity="1"/><rect x="737.9" y="329.3" width="1.3" height="1.3" fill="#fff" opacity="0.75"/><rect x="856.1" y="319.5" width="1.5" height="1.5" fill="#fff" opacity="0.75"/><rect x="840.5" y="131.5" width="1.2" height="1.2" fill="#fff" opacity="0.6"/><rect x="997.8" y="78.6" width="1" height="1" fill="#fff" opacity="1"/><rect x="763.9" y="178.0" width="1.2" height="1.2" fill="#fff" opacity="1"/><rect x="929.8" y="374.9" width="1" height="1" fill="#fff" opacity="0.6"/><rect x="676.1" y="157.2" width="1.3" height="1.3" fill="#fff" opacity="1"/><rect x="773.3" y="347.5" width="1" height="1" fill="#fff" opacity="1"/><rect x="805.6" y="164.1" width="1.3" height="1.3" fill="#fff" opacity="0.6"/><rect x="876.8" y="396.7" width="1" height="1" fill="#fff" opacity="0.6"/><rect x="893.3" y="191.0" width="1.5" height="1.5" fill="#fff" opacity="0.6"/><rect x="765.5" y="353.1" width="1.9" height="1.9" fill="#fff" opacity="1"/><rect x="1021.5" y="181.0" width="1" height="1" fill="#fff" opacity="1"/><rect x="764.2" y="223.6" width="1.9" height="1.9" fill="#fff" opacity="0.6"/><rect x="718.6" y="106.5" width="1.1" height="1.1" fill="#fff" opacity="0.85"/><rect x="915.3" y="122.8" width="0.9" height="0.9" fill="#fff" opacity="1"/><rect x="1026.5" y="33.4" width="1.9" height="1.9" fill="#fff" opacity="1"/><rect x="692.3" y="350.7" width="1.3" height="1.3" fill="#fff" opacity="0.85"/><rect x="791.6" y="375.0" width="1.3" height="1.3" fill="#fff" opacity="0.75"/><rect x="921.0" y="297.7" width="1.1" height="1.1" fill="#fff" opacity="0.75"/><rect x="722.2" y="272.6" width="1.9" height="1.9" fill="#fff" opacity="1"/><rect x="772.0" y="192.5" width="1.3" height="1.3" fill="#fff" opacity="1"/><rect x="847.9" y="282.1" width="1.3" height="1.3" fill="#fff" opacity="0.85"/><rect x="925.0" y="387.0" width="1" height="1" fill="#fff" opacity="0.6"/><rect x="1030.0" y="348.5" width="1.2" height="1.2" fill="#fff" opacity="0.6"/><rect x="978.0" y="230.3" width="1.9" height="1.9" fill="#fff" opacity="0.6"/><rect x="723.3" y="367.3" width="1.9" height="1.9" fill="#fff" opacity="0.6"/><rect x="790.9" y="185.8" width="1.5" height="1.5" fill="#fff" opacity="0.85"/><rect x="928.6" y="129.5" width="1.3" height="1.3" fill="#fff" opacity="0.75"/><rect x="786.9" y="325.8" width="1" height="1" fill="#fff" opacity="1"/><rect x="1027.8" y="280.2" width="1" height="1" fill="#fff" opacity="1"/><rect x="937.6" y="136.1" width="1" height="1" fill="#fff" opacity="0.75"/><rect x="737.5" y="272.4" width="1.2" height="1.2" fill="#fff" opacity="0.75"/><rect x="904.9" y="408.9" width="1.9" height="1.9" fill="#fff" opacity="1"/><rect x="920.4" y="338.0" width="1" height="1" fill="#fff" opacity="0.85"/><rect x="918.1" y="194.3" width="1.5" height="1.5" fill="#fff" opacity="1"/><rect x="1009.3" y="414.7" width="0.9" height="0.9" fill="#fff" opacity="0.75"/><rect x="927.6" y="77.8" width="0.9" height="0.9" fill="#fff" opacity="0.75"/><rect x="769.1" y="315.0" width="1" height="1" fill="#fff" opacity="1"/><rect x="785.5" y="42.3" width="1.9" height="1.9" fill="#fff" opacity="0.75"/><rect x="801.5" y="151.7" width="1.2" height="1.2" fill="#fff" opacity="0.75"/><rect x="808.3" y="271.1" width="1" height="1" fill="#fff" opacity="1"/><rect x="807.4" y="300.6" width="1.2" height="1.2" fill="#fff" opacity="0.75"/><rect x="827.1" y="354.7" width="1.2" height="1.2" fill="#fff" opacity="1"/><rect x="823.5" y="90.8" width="0.9" height="0.9" fill="#fff" opacity="0.85"/><rect x="873.0" y="87.6" width="1.5" height="1.5" fill="#fff" opacity="0.85"/><rect x="782.5" y="63.3" width="1.1" height="1.1" fill="#fff" opacity="0.85"/><rect x="867.6" y="248.3" width="1" height="1" fill="#fff" opacity="0.6"/><rect x="665.6" y="326.4" width="1" height="1" fill="#fff" opacity="0.6"/><rect x="730.7" y="219.1" width="1.1" height="1.1" fill="#fff" opacity="1"/><rect x="842.7" y="192.4" width="1.5" height="1.5" fill="#fff" opacity="1"/><rect x="684.4" y="245.1" width="1.2" height="1.2" fill="#fff" opacity="0.85"/><rect x="733.0" y="144.5" width="1.1" height="1.1" fill="#fff" opacity="1"/><rect x="874.9" y="396.1" width="0.9" height="0.9" fill="#fff" opacity="0.75"/><rect x="981.0" y="397.6" width="1" height="1" fill="#fff" opacity="0.6"/><rect x="763.6" y="41.3" width="1.2" height="1.2" fill="#fff" opacity="0.6"/><rect x="853.8" y="36.1" width="1.1" height="1.1" fill="#fff" opacity="0.6"/><rect x="1018.9" y="36.3" width="1.2" height="1.2" fill="#fff" opacity="0.75"/><rect x="956.9" y="316.6" width="1.5" height="1.5" fill="#fff" opacity="0.85"/><rect x="960.9" y="352.3" width="1" height="1" fill="#fff" opacity="1"/><rect x="812.2" y="304.9" width="1.2" height="1.2" fill="#fff" opacity="1"/><rect x="671.7" y="255.2" width="1.1" height="1.1" fill="#fff" opacity="0.85"/><rect x="807.1" y="174.9" width="1.2" height="1.2" fill="#fff" opacity="0.85"/><rect x="895.6" y="206.1" width="1.2" height="1.2" fill="#fff" opacity="0.85"/><rect x="687.7" y="284.8" width="1" height="1" fill="#fff" opacity="0.85"/><rect x="787.2" y="319.0" width="1.1" height="1.1" fill="#fff" opacity="0.6"/><rect x="938.7" y="243.4" width="1.1" height="1.1" fill="#fff" opacity="0.75"/><rect x="791.9" y="92.2" width="1.3" height="1.3" fill="#fff" opacity="0.85"/><rect x="730.6" y="40.5" width="1.5" height="1.5" fill="#fff" opacity="1"/><rect x="682.4" y="68.7" width="1.1" height="1.1" fill="#fff" opacity="0.6"/><rect x="989.7" y="156.2" width="1" height="1" fill="#fff" opacity="1"/><rect x="1029.4" y="198.5" width="1.1" height="1.1" fill="#fff" opacity="1"/><rect x="814.4" y="305.2" width="1" height="1" fill="#fff" opacity="0.85"/><rect x="689.0" y="183.0" width="1.3" height="1.3" fill="#fff" opacity="0.75"/><rect x="951.5" y="235.2" width="0.9" height="0.9" fill="#fff" opacity="0.75"/><rect x="933.9" y="288.4" width="0.9" height="0.9" fill="#fff" opacity="0.75"/><rect x="891.7" y="165.4" width="1.9" height="1.9" fill="#fff" opacity="1"/><rect x="850.3" y="251.7" width="1" height="1" fill="#fff" opacity="0.6"/><rect x="973.7" y="299.0" width="1.9" height="1.9" fill="#fff" opacity="1"/><rect x="909.9" y="194.3" width="1.5" height="1.5" fill="#fff" opacity="1"/><rect x="748.3" y="264.5" width="0.9" height="0.9" fill="#fff" opacity="1"/><rect x="1004.3" y="236.4" width="1.9" height="1.9" fill="#fff" opacity="1"/><rect x="768.4" y="49.9" width="0.9" height="0.9" fill="#fff" opacity="0.85"/><rect x="719.4" y="213.4" width="1.2" height="1.2" fill="#fff" opacity="1"/><rect x="779.1" y="317.1" width="1.5" height="1.5" fill="#fff" opacity="0.6"/><rect x="984.8" y="81.0" width="1.9" height="1.9" fill="#fff" opacity="0.6"/><rect x="749.9" y="357.2" width="1" height="1" fill="#fff" opacity="0.6"/><rect x="958.9" y="230.0" width="1.2" height="1.2" fill="#fff" opacity="0.6"/><rect x="731.6" y="46.8" width="1.3" height="1.3" fill="#fff" opacity="0.85"/><rect x="855.1" y="167.0" width="1.1" height="1.1" fill="#fff" opacity="1"/><rect x="668.3" y="197.2" width="1.9" height="1.9" fill="#fff" opacity="0.85"/><rect x="1019.8" y="124.3" width="1" height="1" fill="#fff" opacity="1"/><rect x="826.4" y="325.0" width="1.1" height="1.1" fill="#fff" opacity="0.6"/><rect x="959.8" y="362.9" width="1" height="1" fill="#fff" opacity="0.75"/><rect x="964.1" y="101.1" width="1.3" height="1.3" fill="#fff" opacity="0.6"/><rect x="1007.6" y="401.7" width="1.1" height="1.1" fill="#fff" opacity="0.85"/><rect x="706.6" y="102.3" width="1.5" height="1.5" fill="#fff" opacity="0.6"/><rect x="978.1" y="270.8" width="1.9" height="1.9" fill="#fff" opacity="0.6"/><rect x="695.8" y="283.2" width="1.3" height="1.3" fill="#fff" opacity="0.75"/><rect x="870.7" y="416.8" width="1.5" height="1.5" fill="#fff" opacity="0.6"/><rect x="965.9" y="302.8" width="1.2" height="1.2" fill="#fff" opacity="1"/><rect x="740.4" y="113.1" width="1" height="1" fill="#fff" opacity="0.75"/><rect x="920.4" y="212.5" width="1" height="1" fill="#fff" opacity="0.85"/><rect x="706.0" y="396.2" width="1.3" height="1.3" fill="#fff" opacity="0.85"/><rect x="735.8" y="417.0" width="1.1" height="1.1" fill="#fff" opacity="0.85"/><rect x="985.9" y="329.9" width="1.1" height="1.1" fill="#fff" opacity="0.75"/><rect x="689.5" y="134.9" width="1.3" height="1.3" fill="#fff" opacity="1"/><rect x="814.7" y="208.8" width="1" height="1" fill="#fff" opacity="0.6"/><rect x="791.5" y="304.3" width="1.1" height="1.1" fill="#fff" opacity="1"/><rect x="877.9" y="142.2" width="1.2" height="1.2" fill="#fff" opacity="0.6"/><rect x="914.0" y="208.1" width="1.9" height="1.9" fill="#fff" opacity="1"/><rect x="736.7" y="192.2" width="1.1" height="1.1" fill="#fff" opacity="1"/><rect x="900.3" y="174.1" width="1.3" height="1.3" fill="#fff" opacity="0.85"/><rect x="879.8" y="286.8" width="1.2" height="1.2" fill="#fff" opacity="0.85"/><rect x="908.5" y="36.9" width="1.1" height="1.1" fill="#fff" opacity="0.6"/><rect x="815.7" y="83.2" width="1.2" height="1.2" fill="#fff" opacity="1"/><rect x="831.2" y="400.0" width="1" height="1" fill="#fff" opacity="1"/><rect x="705.9" y="392.3" width="0.9" height="0.9" fill="#fff" opacity="0.85"/><rect x="805.9" y="417.7" width="0.9" height="0.9" fill="#fff" opacity="0.75"/><rect x="758.3" y="332.1" width="0.9" height="0.9" fill="#fff" opacity="0.75"/><rect x="744.0" y="397.2" width="1" height="1" fill="#fff" opacity="0.6"/><rect x="745.3" y="375.3" width="1.1" height="1.1" fill="#fff" opacity="1"/><rect x="738.8" y="310.2" width="1.5" height="1.5" fill="#fff" opacity="0.6"/><rect x="697.2" y="374.4" width="1.2" height="1.2" fill="#fff" opacity="1"/><rect x="759.1" y="294.0" width="1.3" height="1.3" fill="#fff" opacity="0.6"/><rect x="778.0" y="415.7" width="1" height="1" fill="#fff" opacity="0.85"/><rect x="676.9" y="322.2" width="1" height="1" fill="#fff" opacity="1"/><rect x="822.4" y="323.3" width="1.5" height="1.5" fill="#fff" opacity="1"/><rect x="755.6" y="362.9" width="1.9" height="1.9" fill="#fff" opacity="0.75"/><rect x="837.3" y="311.7" width="1" height="1" fill="#fff" opacity="1"/><rect x="809.1" y="307.1" width="0.9" height="0.9" fill="#fff" opacity="0.75"/><rect x="813.6" y="382.5" width="1" height="1" fill="#fff" opacity="0.85"/><rect x="685.6" y="330.2" width="0.9" height="0.9" fill="#fff" opacity="1"/><rect x="716.5" y="306.2" width="1.5" height="1.5" fill="#fff" opacity="0.85"/><rect x="866.6" y="363.1" width="1" height="1" fill="#fff" opacity="1"/><rect x="682.9" y="371.5" width="1.2" height="1.2" fill="#fff" opacity="1"/><rect x="751.0" y="352.6" width="1.3" height="1.3" fill="#fff" opacity="1"/><rect x="726.8" y="359.4" width="1" height="1" fill="#fff" opacity="1"/><rect x="830.8" y="377.7" width="1.3" height="1.3" fill="#fff" opacity="0.6"/><rect x="710.2" y="387.2" width="1.9" height="1.9" fill="#fff" opacity="0.6"/><rect x="684.5" y="379.3" width="1.3" height="1.3" fill="#fff" opacity="0.75"/><rect x="738.6" y="330.2" width="0.9" height="0.9" fill="#fff" opacity="0.85"/><rect x="818.5" y="335.8" width="1" height="1" fill="#fff" opacity="0.75"/><rect x="826.1" y="346.0" width="1.3" height="1.3" fill="#fff" opacity="1"/><rect x="682.9" y="342.4" width="1.1" height="1.1" fill="#fff" opacity="0.85"/><rect x="831.0" y="392.1" width="1.2" height="1.2" fill="#fff" opacity="0.6"/><rect x="744.0" y="302.6" width="1" height="1" fill="#fff" opacity="0.85"/><rect x="854.5" y="387.6" width="0.9" height="0.9" fill="#fff" opacity="1"/><rect x="864.7" y="408.4" width="1" height="1" fill="#fff" opacity="0.75"/><rect x="817.1" y="340.0" width="1.9" height="1.9" fill="#fff" opacity="1"/><rect x="846.9" y="384.4" width="1" height="1" fill="#fff" opacity="0.85"/><rect x="686.2" y="307.0" width="1.2" height="1.2" fill="#fff" opacity="1"/><rect x="682.9" y="333.2" width="1" height="1" fill="#fff" opacity="0.6"/><rect x="746.6" y="405.9" width="1.5" height="1.5" fill="#fff" opacity="0.75"/><rect x="764.2" y="379.6" width="1.5" height="1.5" fill="#fff" opacity="1"/><rect x="815.2" y="313.1" width="1.3" height="1.3" fill="#fff" opacity="0.75"/><rect x="796.5" y="339.9" width="1.5" height="1.5" fill="#fff" opacity="1"/><rect x="736.4" y="366.1" width="1.9" height="1.9" fill="#fff" opacity="1"/><rect x="710.9" y="325.2" width="1.5" height="1.5" fill="#fff" opacity="1"/><rect x="827.6" y="324.4" width="1.1" height="1.1" fill="#fff" opacity="0.75"/><rect x="777.7" y="415.9" width="1.9" height="1.9" fill="#fff" opacity="1"/>
<path d="M823 286L935.8 83.8L980 70L1013.4 144.2z" fill="#1f6a08"/>
<ellipse cx="978.7" cy="109.3" rx="50" ry="38.2" transform="rotate(33 978.7 109.3)" fill="#0b3a05" stroke="#4fd41c" stroke-width="0.8"/>
<path d="M976 103.5L984 111L872 262L862 254z" fill="#7a7a12" opacity="0.9"/>
<ellipse cx="980" cy="107" rx="4.2" ry="4.6" fill="#6a6a10" stroke="#a89818" stroke-width="0.6"/>
<path d="M979 109L868 258" stroke="#e03010" stroke-width="0.5"/>
<path d="M982 133.7L1010.7 201Q1023 232 1025.3 268L1025 330L1023.8 372" stroke="#4cdce2" stroke-width="0.9" fill="none"/>
<path d="M1023.3 372L1022.5 419" stroke="#1f8a92" stroke-width="0.9" fill="none"/>
<path d="M663 303Q760 286 869 289Q960 293 1035 313.5" stroke="#4cdce2" stroke-width="1" fill="none"/>
<path d="M869.7 289L857 419" stroke="#c8c8c8" stroke-width="0.6"/>
<ellipse cx="832.5" cy="317" rx="1.6" ry="9" transform="rotate(-15 832.5 317)" fill="url(#tl)"/>
<ellipse cx="846.5" cy="371" rx="2.6" ry="17" transform="rotate(-15 846.5 371)" fill="url(#tl)"/>
<ellipse cx="857" cy="190" rx="3" ry="18" transform="rotate(-12 857 190)" fill="#4a2800" opacity="0.3"/>
<ellipse cx="872" cy="257.7" rx="64" ry="4.6" fill="url(#fl)"/>
<ellipse cx="872" cy="257.7" rx="36" ry="2.6" fill="url(#fl2)"/>
<ellipse cx="870" cy="258" rx="5.5" ry="74" transform="rotate(-9.5 870 258)" fill="url(#fl)"/>
<ellipse cx="870" cy="258" rx="2.6" ry="46" transform="rotate(-9.5 870 258)" fill="url(#fl2)"/>
<path d="M882 226q4 -5 10 -4q7 2 7 9q0 6 -5 9l-9 3q-5 -2 -6 -8q0 -6 3 -9z" fill="#8a6618"/>
<path d="M853 246l12 -8.5l23.5 0l3 22l-1.5 15.5l-14 3l-4 -12l-19 -6z" fill="#0c0c10"/>
<path d="M848 267l25 -1l1 12l-7 7l-9 1.5l-9 -9z" fill="#8a6618"/>
<g transform="translate(858.5 248.7) rotate(-56)"><rect x="-9.5" y="-4.5" width="19" height="9" rx="3.4615384615384612" fill="#f4f4f4" stroke="#222" stroke-width="0.5"/><ellipse cx="-7.1" cy="0" rx="3.2" ry="4.5" fill="#15151c"/><ellipse cx="-8.3" cy="0" rx="1.3" ry="1.7" fill="none" stroke="#28307a" stroke-width="0.7"/><path d="M-2.5 3.2H7.5" stroke="#b0b0b0" stroke-width="1"/></g>
<g transform="translate(880.4 247) rotate(-56)"><rect x="-13.5" y="-5.7" width="27" height="11.4" rx="4.384615384615385" fill="#f4f4f4" stroke="#222" stroke-width="0.5"/><ellipse cx="-11.1" cy="0" rx="3.2" ry="5.7" fill="#15151c"/><ellipse cx="-12.3" cy="0" rx="1.3" ry="1.7" fill="none" stroke="#28307a" stroke-width="0.7"/><path d="M-6.5 4.4H11.5" stroke="#b0b0b0" stroke-width="1"/></g>
<path d="M872 259l9 -3l5 11l-8 5z" fill="#eee" stroke="#222" stroke-width="0.5"/>
<g transform="translate(884.3 268.6) rotate(-56)"><rect x="-8.5" y="-4.5" width="17" height="9" rx="3.4615384615384612" fill="#ececec" stroke="#222" stroke-width="0.5"/><ellipse cx="-6.1" cy="0" rx="3.2" ry="4.5" fill="#15151c"/><ellipse cx="-7.3" cy="0" rx="1.3" ry="1.7" fill="none" stroke="#28307a" stroke-width="0.7"/><path d="M-1.5 3.2H6.5" stroke="#b0b0b0" stroke-width="1"/></g>
</g>
<g class="m" font-size="8.17">
<text x="672.5" y="155.30" fill="#f6f600" stroke="#f6f600" stroke-width="0.2" xml:space="preserve">Track_Beam-To-RV Radar_RCS</text>
<text x="672.5" y="165.13" fill="#f6f600" stroke="#f6f600" stroke-width="0.2" xml:space="preserve">Azimuth (deg):</text>
<text x="672.5" y="174.96" fill="#f6f600" stroke="#f6f600" stroke-width="0.2" xml:space="preserve">Elevation (deg):</text>
<text x="672.5" y="184.79" fill="#f6f600" stroke="#f6f600" stroke-width="0.2" xml:space="preserve">Range (km):</text>
<text x="672.5" y="194.62" fill="#f6f600" stroke="#f6f600" stroke-width="0.2" xml:space="preserve">S/T SNR1 (dB):</text>
<text x="672.5" y="204.45" fill="#f6f600" stroke="#f6f600" stroke-width="0.2" xml:space="preserve">RCS (dBsm):</text>
<text x="672.5" y="218.60" fill="#52f414" stroke="#52f414" stroke-width="0.2" xml:space="preserve">Interceptor_KV Intercept_Summary</text>
<text x="672.5" y="228.43" fill="#52f414" stroke="#52f414" stroke-width="0.2" xml:space="preserve">Range to Target (km):      125.003</text>
<text x="672.5" y="238.26" fill="#52f414" stroke="#52f414" stroke-width="0.2" xml:space="preserve">Closing Velocity (km/sec):   8.639</text>
<text x="672.5" y="248.09" fill="#52f414" stroke="#52f414" stroke-width="0.2" xml:space="preserve">Closing Angle (deg):       122.393</text>
<text x="672.5" y="267.50" fill="#52f414" stroke="#52f414" stroke-width="0.2" xml:space="preserve">KV_uplink-To-Patch_ant uplink</text>
<text x="672.5" y="277.33" fill="#52f414" stroke="#52f414" stroke-width="0.2" xml:space="preserve">Rcvd. Iso. Power (dBW):    -144.97</text>
<text x="672.5" y="287.16" fill="#52f414" stroke="#52f414" stroke-width="0.2" xml:space="preserve">C/N (dB):                   -26.80</text>
<text x="672.5" y="296.99" fill="#52f414" stroke="#52f414" stroke-width="0.2" xml:space="preserve">g/T (dB/K):             -27.383701</text>
</g>
<text x="823" y="290" font-size="6.5" fill="#7ab0f0" opacity="0.85" class="m">30105</text>
<circle cx="664.6" cy="6.8" r="4.4" fill="url(#ic)" stroke="#e8f0ff" stroke-width="0.8"/><path d="M662.5 5.5l2 -1.5 1.5 1.5 -1 2.5 -2 0.5z" fill="#3a5ab8" opacity="0.8"/>
<path d="M663.7 17v9.5" stroke="#a8a868" stroke-width="0.8" stroke-dasharray="0.8 0.8"/>
<circle cx="783.5" cy="19.8" r="2.3" fill="none" stroke="#889" stroke-width="0.7"/><path d="M782 21.6l-2.6 3" stroke="#889" stroke-width="0.8"/><path d="M788 21.3h1.6" stroke="#667" stroke-width="0.7"/>
<circle cx="797.3" cy="21" r="3.3" fill="none" stroke="#8aa8d8" stroke-width="1.6" stroke-dasharray="1.3 0.8"/><circle cx="797.3" cy="21" r="2.2" fill="#a8c0e4" stroke="#7a98c8" stroke-width="0.8"/><circle cx="797.3" cy="21" r="1" fill="#fff"/>
<path d="M809 23.5h2.6M809 25h2.6l-1.3 1.5z" stroke="#444" stroke-width="0.5" fill="#444"/>
<path d="M816.5 17v9.5" stroke="#a8a868" stroke-width="0.8" stroke-dasharray="0.8 0.8"/>
<rect x="819.6" y="16.6" width="2.2" height="8.4" fill="#d03010"/><path d="M828 16.6v8.4l-6 -4.2z" fill="#d03010"/>
<path d="M837.9 16.6v8.4l-5.4 -4.2z" fill="#2030c8"/><rect x="838.3" y="16.6" width="1.7" height="8.4" fill="#2030c8"/><rect x="840.6" y="16.6" width="1.5" height="8.4" fill="#2030c8"/>
<path d="M852.1 16.6v8.4l-5.6 -4.2z" fill="#2030c8"/>
<rect x="858.8" y="16.6" width="2.4" height="8.4" fill="#2030c8"/><rect x="862.6" y="16.6" width="2.4" height="8.4" fill="#2030c8"/>
<path d="M872.5 16.6v8.4l5.6 -4.2z" fill="#2030c8"/>
<rect x="882.6" y="16.6" width="1.5" height="8.4" fill="#2030c8"/><rect x="884.9" y="16.6" width="1.7" height="8.4" fill="#2030c8"/><path d="M887 16.6v8.4l5.4 -4.2z" fill="#2030c8"/>
<path d="M895.6 16.6h8.6l-4.3 4zM895.6 19.8l4.3 4 4.3 -4v2.2l-4.3 4 -4.3 -4z" fill="#2030c8"/>
<path d="M908 25.4h8.6l-4.3 -4zM908 22.2l4.3 -4 4.3 4v-2.2l-4.3 -4 -4.3 4z" fill="#2030c8"/>
<path d="M919.5 17v9.5" stroke="#bbb" stroke-width="0.6"/>
<rect x="923" y="15.6" width="11.5" height="12" fill="#c0d4f0" stroke="#5a7ab8" stroke-width="0.6"/>
<circle cx="928.7" cy="21.3" r="3.7" fill="#e8d000" stroke="#2a2a00" stroke-width="0.8"/><path d="M928.7 21.3v-2.4M928.7 21.3l1.8 1" stroke="#2a2a00" stroke-width="0.7"/>
<circle cx="941.5" cy="21.3" r="3.7" fill="#e8d000" stroke="#2a2a00" stroke-width="0.8"/><path d="M941.5 21.3v-2.4M941.5 21.3l1.8 1" stroke="#2a2a00" stroke-width="0.7"/>
<circle cx="954.5" cy="21.3" r="3.7" fill="#e8d000" stroke="#2a2a00" stroke-width="0.8"/><path d="M954.5 21.3v-2.4M954.5 21.3l1.8 1" stroke="#2a2a00" stroke-width="0.7"/>
<path d="M924.5 25.5l3 -1.5M950 25.5l3 -1.5" stroke="#2a2a00" stroke-width="0.9"/>
<path d="M1035.5 18h2M1035.5 19.5h2M1035.5 23.5h2.4l-1.2 1.6z" stroke="#444" stroke-width="0.5" fill="#444"/>
<circle cx="668" cy="428.6" r="4" fill="#2a50c0" stroke="#123" stroke-width="0.5"/><path d="M665.3 427.3q2.4 -2.6 3.6 0t2 3l-2.6 2z" fill="#3aa03a"/>
<path d="M1012 443.3h3l-1.5 1.8z" fill="#fff"/><path d="M1021 441.5h2.4v3h-2.4zM1022.2 444.5v2" stroke="#fff" stroke-width="0.7" fill="none"/><path d="M1029.3 441.8l3 3.4M1032.3 441.8l-3 3.4" stroke="#f4f4e4" stroke-width="0.7"/>
<circle cx="669" cy="459.4" r="4.1" fill="#d83020" stroke="#801010" stroke-width="0.5"/><rect x="666.6" y="458.1" width="4.8" height="2.6" rx="0.8" fill="#fff" opacity="0.85"/>
<path d="M677.6 458.7h8.6M681.9 454.6v7" stroke="#2a7ae8" stroke-width="1.5"/><path d="M679.6 461l2.3 2.8 2.3 -2.8z" fill="#1a3ab8"/>
<path d="M689.8 455.6l7.2 7.6M697 455.6l-7.2 7.6" stroke="#e03a18" stroke-width="1.5"/>
<rect x="701.8" y="456" width="7.6" height="7.2" fill="#f4e860" stroke="#8a7a10" stroke-width="0.7"/><path d="M703.2 458.5h4.6M703.2 460.5h4.6M703 455v1.6M708 455v1.6" stroke="#6a5a10" stroke-width="0.5"/>
<path d="M717.90 460.3V466.5M720.39 463.3V466.5M722.88 463.3V466.5M725.36 463.3V466.5M727.85 463.3V466.5M730.34 463.3V466.5M732.82 463.3V466.5M735.31 463.3V466.5M737.80 463.3V466.5M740.29 463.3V466.5M742.77 462V466.5M745.26 463.3V466.5M747.75 463.3V466.5M750.24 463.3V466.5M752.73 463.3V466.5M755.21 463.3V466.5M757.70 463.3V466.5M760.19 463.3V466.5M762.67 463.3V466.5M765.16 463.3V466.5M767.65 460.3V466.5M770.14 463.3V466.5M772.62 463.3V466.5M775.11 463.3V466.5M777.60 463.3V466.5M780.09 463.3V466.5M782.57 463.3V466.5M785.06 463.3V466.5M787.55 463.3V466.5M790.04 463.3V466.5M792.52 462V466.5M795.01 463.3V466.5M797.50 463.3V466.5M799.99 463.3V466.5M802.48 463.3V466.5M804.96 463.3V466.5M807.45 463.3V466.5M809.94 463.3V466.5M812.42 463.3V466.5M814.91 463.3V466.5M817.40 460.3V466.5M819.89 463.3V466.5M822.38 463.3V466.5M824.86 463.3V466.5M827.35 463.3V466.5M829.84 463.3V466.5M832.32 463.3V466.5M834.81 463.3V466.5M837.30 463.3V466.5M839.79 463.3V466.5M842.27 462V466.5M844.76 463.3V466.5M847.25 463.3V466.5M849.74 463.3V466.5M852.22 463.3V466.5M854.71 463.3V466.5M857.20 463.3V466.5M859.69 463.3V466.5M862.17 463.3V466.5M864.66 463.3V466.5M867.15 460.3V466.5M869.64 463.3V466.5M872.12 463.3V466.5M874.61 463.3V466.5M877.10 463.3V466.5M879.59 463.3V466.5M882.08 463.3V466.5M884.56 463.3V466.5M887.05 463.3V466.5M889.54 463.3V466.5M892.02 462V466.5M894.51 463.3V466.5M897.00 463.3V466.5M899.49 463.3V466.5M901.97 463.3V466.5M904.46 463.3V466.5M906.95 463.3V466.5M909.44 463.3V466.5M911.92 463.3V466.5M914.41 463.3V466.5M916.90 460.3V466.5M919.39 463.3V466.5M921.88 463.3V466.5M924.36 463.3V466.5M926.85 463.3V466.5M929.34 463.3V466.5M931.83 463.3V466.5M934.31 463.3V466.5M936.80 463.3V466.5M939.29 463.3V466.5M941.77 462V466.5M944.26 463.3V466.5M946.75 463.3V466.5M949.24 463.3V466.5M951.72 463.3V466.5M954.21 463.3V466.5M956.70 463.3V466.5M959.19 463.3V466.5M961.67 463.3V466.5M964.16 463.3V466.5M966.65 460.3V466.5M969.14 463.3V466.5M971.62 463.3V466.5M974.11 463.3V466.5M976.60 463.3V466.5M979.09 463.3V466.5M981.58 463.3V466.5M984.06 463.3V466.5M986.55 463.3V466.5M989.04 463.3V466.5M991.52 462V466.5M994.01 463.3V466.5M996.50 463.3V466.5M998.99 463.3V466.5M1001.47 463.3V466.5M1003.96 463.3V466.5M1006.45 463.3V466.5M1008.94 463.3V466.5M1011.42 463.3V466.5M1013.91 463.3V466.5M1016.40 460.3V466.5M1018.89 463.3V466.5M1021.38 463.3V466.5M1023.86 463.3V466.5M1026.35 463.3V466.5M1028.84 463.3V466.5M1031.33 463.3V466.5" stroke="#222" stroke-width="0.55"/>
<path d="M716.3 466.2H1034.6" stroke="#222" stroke-width="0.9"/>
<text x="717.7" y="460.4" font-size="6.6" text-anchor="start" fill="#222">0</text>
<text x="767.6" y="460.4" font-size="6.6" text-anchor="middle" fill="#222">600</text>
<text x="817.4" y="460.4" font-size="6.6" text-anchor="middle" fill="#222">1200</text>
<text x="867.1" y="460.4" font-size="6.6" text-anchor="middle" fill="#222">1800</text>
<text x="916.9" y="460.4" font-size="6.6" text-anchor="middle" fill="#222">2400</text>
<text x="966.6" y="460.4" font-size="6.6" text-anchor="middle" fill="#222">3000</text>
<text x="1016.4" y="460.4" font-size="6.6" text-anchor="middle" fill="#222">3600</text>
<path d="M811.6 462V532.5" stroke="#e04a28" stroke-width="0.8"/>
<path d="M809.3 458.5h4.6v3.2l-2.3 2.6 -2.3 -2.6z" fill="#7aa8e8" stroke="#2a4a98" stroke-width="0.6"/>
<rect x="717.6" y="469.7" width="2.6" height="6.6" rx="1" fill="#38c028"/>
<path d="M828.5 469.5a3.4 3.4 0 0 0 0 7h1.6v-7z" fill="#c84038"/>
<path d="M708 471.6h6.6l-3.3 3.6z" fill="#111"/>
<path d="M699.3 471.3l4.6 3M703.9 471.3l-4.6 3" stroke="#222" stroke-width="0.7"/><path d="M699.3 471.5h4.6" stroke="#222" stroke-width="0.7"/>
<path d="M716.3 485l2 -2 2 2 -2 2z" fill="#3a6ab8" stroke="#1a3a78" stroke-width="0.4"/>
<path d="M720.7 485l2 -2 2 2 -2 2z" fill="#3a6ab8" stroke="#1a3a78" stroke-width="0.4"/>
<path d="M725.5 485l2 -2 2 2 -2 2z" fill="#3a6ab8" stroke="#1a3a78" stroke-width="0.4"/>
<path d="M729 485l2 -2 2 2 -2 2z" fill="#3a6ab8" stroke="#1a3a78" stroke-width="0.4"/>
<path d="M770.3 485l2 -2 2 2 -2 2z" fill="#3a6ab8" stroke="#1a3a78" stroke-width="0.4"/>
<path d="M716.3 495.2l2 -2 2 2 -2 2z" fill="#3a6ab8" stroke="#1a3a78" stroke-width="0.4"/>
<path d="M729 495.2l2 -2 2 2 -2 2z" fill="#3a6ab8" stroke="#1a3a78" stroke-width="0.4"/>
<path d="M770.3 495.2l2 -2 2 2 -2 2z" fill="#3a6ab8" stroke="#1a3a78" stroke-width="0.4"/>
<path d="M779.5 495.2l2 -2 2 2 -2 2z" fill="#3a6ab8" stroke="#1a3a78" stroke-width="0.4"/>
<path d="M787 495.2l2 -2 2 2 -2 2z" fill="#3a6ab8" stroke="#1a3a78" stroke-width="0.4"/>
<path d="M803.5 495.2l2 -2 2 2 -2 2z" fill="#3a6ab8" stroke="#1a3a78" stroke-width="0.4"/>
<path d="M810.3 495.2l2 -2 2 2 -2 2z" fill="#3a6ab8" stroke="#1a3a78" stroke-width="0.4"/>
<circle cx="668" cy="485" r="3" fill="#ddd" stroke="#333" stroke-width="0.6"/><path d="M668 485v-2M668 485l1.4 0.8M666.8 481.2h2.4" stroke="#333" stroke-width="0.5"/>
<rect x="664.8" y="493" width="5.4" height="4.2" fill="#222"/><path d="M670.2 494.6l2 -1.4v4l-2 -1.4z" fill="#222"/><circle cx="666" cy="492.5" r="1" fill="#222"/><circle cx="668.6" cy="492.5" r="1" fill="#222"/>
<circle cx="685.5" cy="538.7" r="2.8" fill="#fff" stroke="#222" stroke-width="0.8"/><path d="M687.5 540.8l2.6 2.8" stroke="#222" stroke-width="1.1"/><path d="M684.0 538.7h3" stroke="#222" stroke-width="0.6"/><path d="M685.5 537.2v3" stroke="#222" stroke-width="0.6"/>
<circle cx="697.8" cy="538.7" r="2.8" fill="#fff" stroke="#222" stroke-width="0.8"/><path d="M699.8 540.8l2.6 2.8" stroke="#222" stroke-width="1.1"/><path d="M696.3 538.7h3" stroke="#222" stroke-width="0.6"/>
<path d="M713.8 536.5v6.6l-5.6 -3.3z" fill="#2a5ac0"/>
<path d="M1026 536.5v6.6l5.8 -3.3z" fill="#1a3a98"/>
<rect x="718.6" y="540.5" width="1.2" height="1.2" fill="#e03020"/>
<path d="M673.8 547.6l4 7.2h-8z" fill="#f4e818" stroke="#333" stroke-width="0.6"/><path d="M673.8 550v2.6M673.8 553.3v0.8" stroke="#111" stroke-width="0.9"/>
<path d="M682.2 549.8q4.4 -3.6 8.8 0M683.6 551.5q3 -2.4 6 0M685 553q1.6 -1.2 3.2 0" stroke="#28b028" stroke-width="1" fill="none"/><circle cx="686.6" cy="554.7" r="1" fill="#28a828"/>
<path d="M1030.5 557.5l3 -3M1032 557.8l1.6 -1.6" stroke="#aaa" stroke-width="0.6" stroke-dasharray="0.7 0.7"/>
</svg>
</body></html>
